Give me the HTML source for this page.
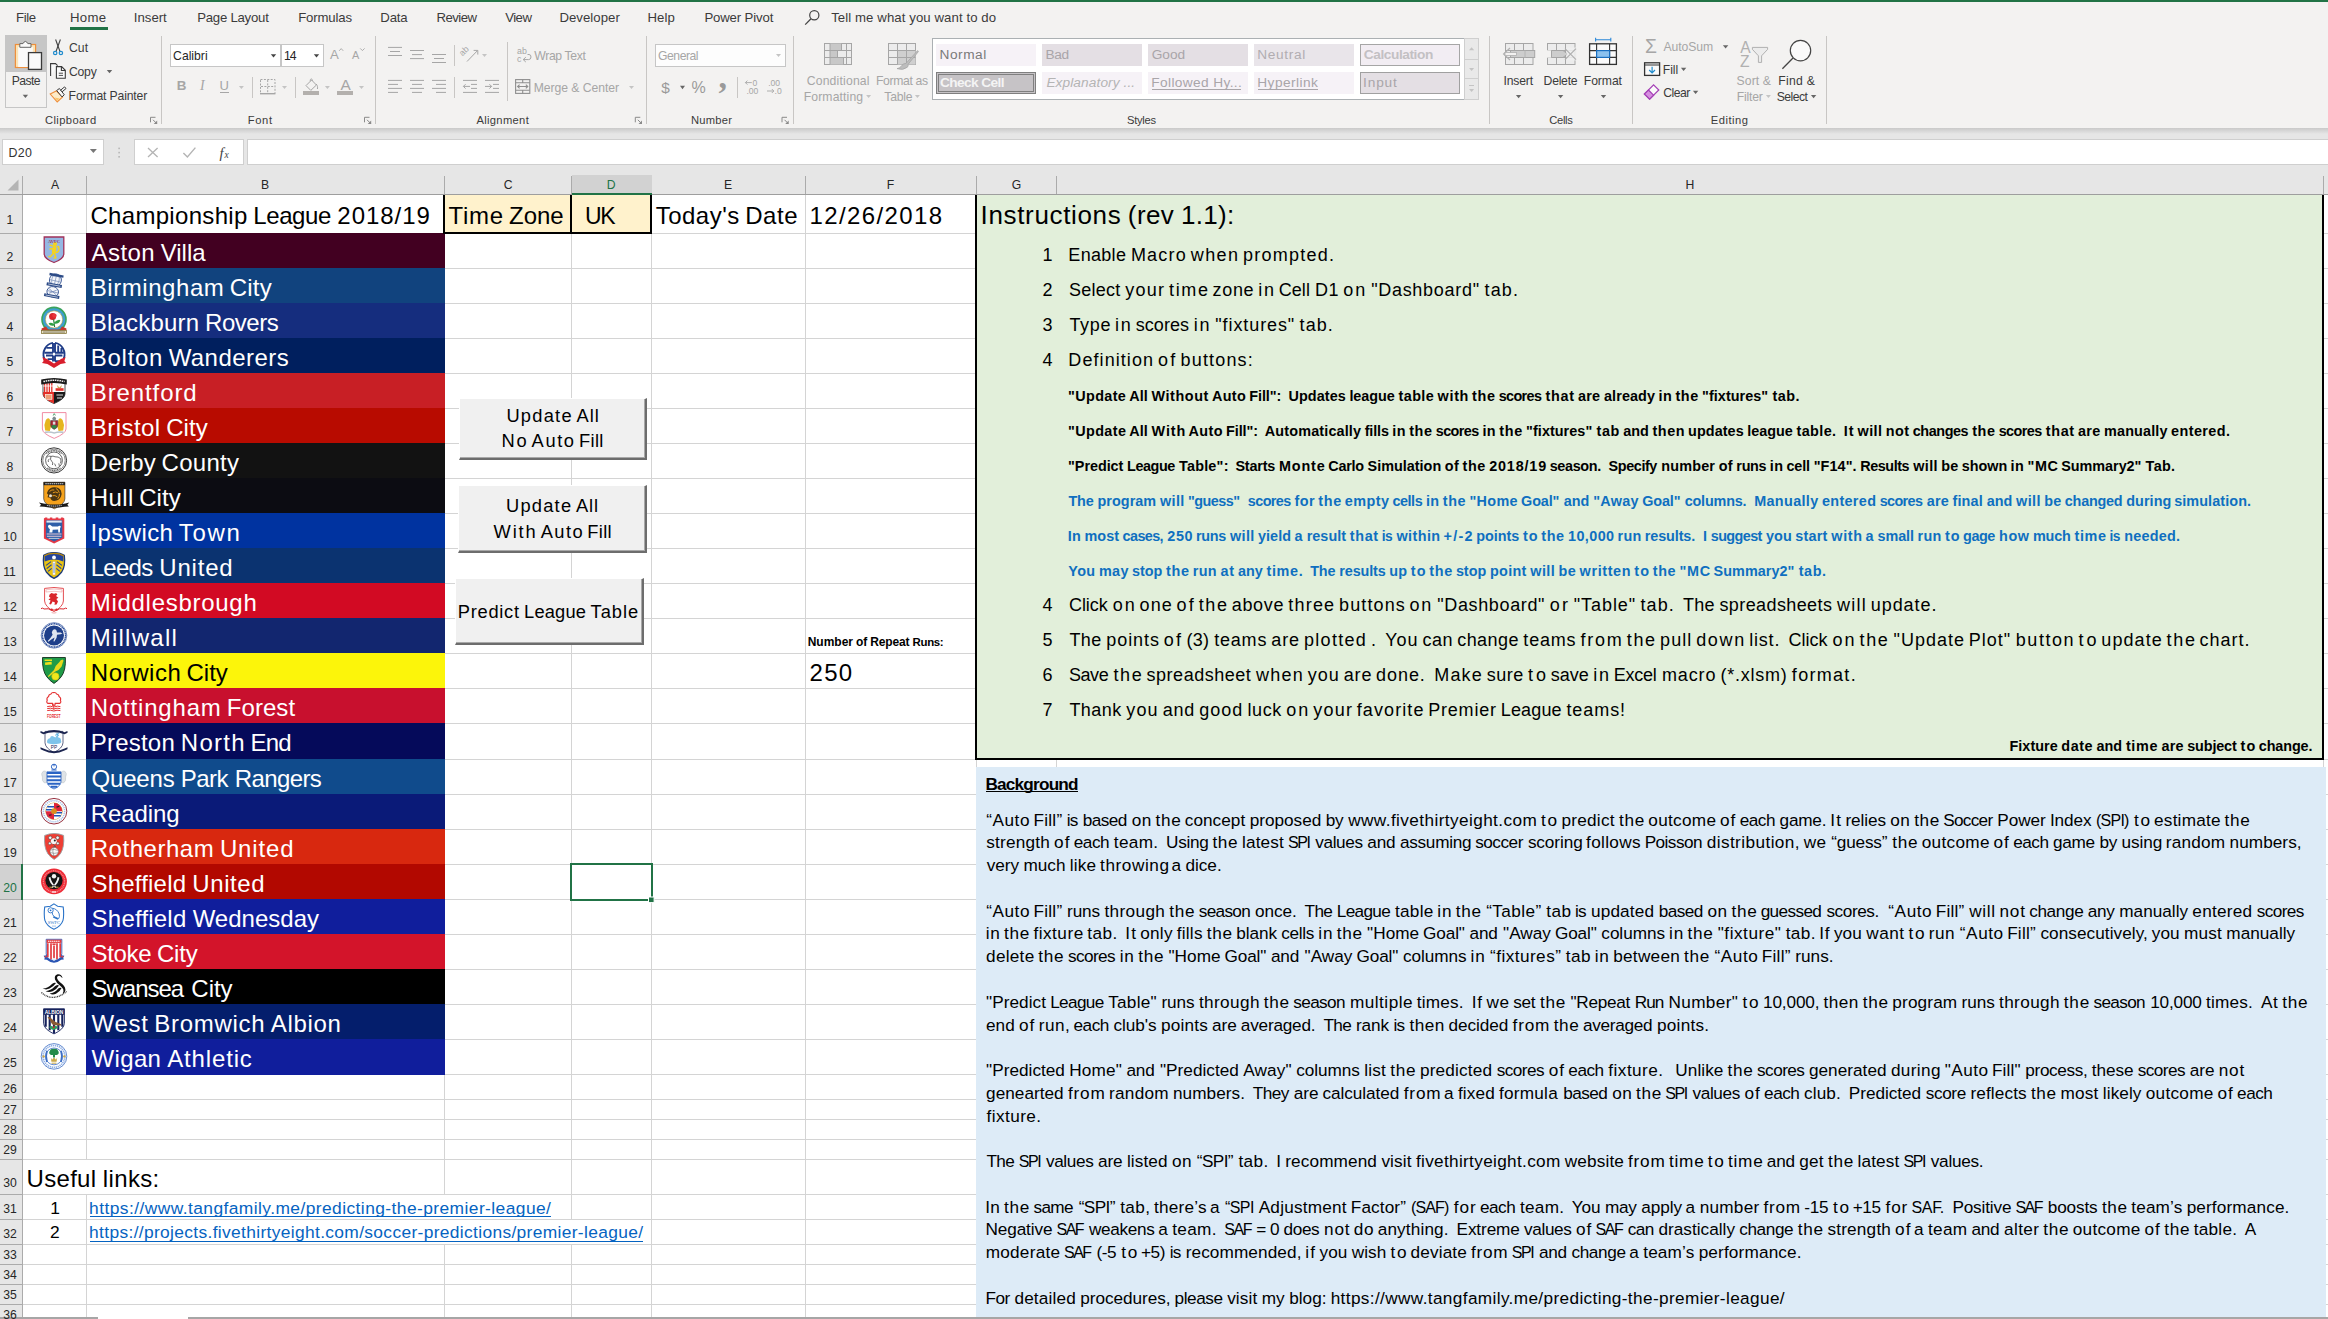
<!DOCTYPE html>
<html><head><meta charset="utf-8"><title>Dashboard</title><style>
html,body{margin:0;padding:0;}
body{width:2328px;height:1319px;overflow:hidden;background:#fff;position:relative;font-family:"Liberation Sans",sans-serif;}
#app{position:absolute;left:0;top:0;width:2328px;height:1319px;overflow:hidden;}
#app>div{position:absolute;box-sizing:border-box;}
svg.ov{position:absolute;left:0;top:0;}
svg.ov text{font-family:"Liberation Sans",sans-serif;white-space:pre;}
</style></head>
<body><div id="app">
<div style="left:0px;top:128px;width:2328px;height:67px;background:#e6e6e6;"></div>
<div style="left:0px;top:195px;width:22px;height:1124px;background:#e6e6e6;"></div>
<div style="left:86px;top:195px;width:1px;height:1124px;background:#d4d4d4;"></div>
<div style="left:444px;top:195px;width:1px;height:1124px;background:#d4d4d4;"></div>
<div style="left:571px;top:195px;width:1px;height:1124px;background:#d4d4d4;"></div>
<div style="left:651px;top:195px;width:1px;height:1124px;background:#d4d4d4;"></div>
<div style="left:805px;top:195px;width:1px;height:1124px;background:#d4d4d4;"></div>
<div style="left:86px;top:1160px;width:1px;height:34px;background:#fff;"></div>
<div style="left:444px;top:1195px;width:1px;height:49px;background:#fff;"></div>
<div style="left:571px;top:1220px;width:1px;height:24px;background:#fff;"></div>
<div style="left:22px;top:195px;width:1px;height:1124px;background:#ababab;"></div>
<div style="left:23px;top:233px;width:953px;height:1px;background:#d4d4d4;"></div>
<div style="left:2324px;top:233px;width:4px;height:1px;background:#d4d4d4;"></div>
<div style="left:0px;top:233px;width:22px;height:1px;background:#ababab;"></div>
<div style="left:23px;top:268px;width:953px;height:1px;background:#d4d4d4;"></div>
<div style="left:2324px;top:268px;width:4px;height:1px;background:#d4d4d4;"></div>
<div style="left:0px;top:268px;width:22px;height:1px;background:#ababab;"></div>
<div style="left:23px;top:303px;width:953px;height:1px;background:#d4d4d4;"></div>
<div style="left:2324px;top:303px;width:4px;height:1px;background:#d4d4d4;"></div>
<div style="left:0px;top:303px;width:22px;height:1px;background:#ababab;"></div>
<div style="left:23px;top:338px;width:953px;height:1px;background:#d4d4d4;"></div>
<div style="left:2324px;top:338px;width:4px;height:1px;background:#d4d4d4;"></div>
<div style="left:0px;top:338px;width:22px;height:1px;background:#ababab;"></div>
<div style="left:23px;top:373px;width:953px;height:1px;background:#d4d4d4;"></div>
<div style="left:2324px;top:373px;width:4px;height:1px;background:#d4d4d4;"></div>
<div style="left:0px;top:373px;width:22px;height:1px;background:#ababab;"></div>
<div style="left:23px;top:408px;width:953px;height:1px;background:#d4d4d4;"></div>
<div style="left:2324px;top:408px;width:4px;height:1px;background:#d4d4d4;"></div>
<div style="left:0px;top:408px;width:22px;height:1px;background:#ababab;"></div>
<div style="left:23px;top:443px;width:953px;height:1px;background:#d4d4d4;"></div>
<div style="left:2324px;top:443px;width:4px;height:1px;background:#d4d4d4;"></div>
<div style="left:0px;top:443px;width:22px;height:1px;background:#ababab;"></div>
<div style="left:23px;top:478px;width:953px;height:1px;background:#d4d4d4;"></div>
<div style="left:2324px;top:478px;width:4px;height:1px;background:#d4d4d4;"></div>
<div style="left:0px;top:478px;width:22px;height:1px;background:#ababab;"></div>
<div style="left:23px;top:513px;width:953px;height:1px;background:#d4d4d4;"></div>
<div style="left:2324px;top:513px;width:4px;height:1px;background:#d4d4d4;"></div>
<div style="left:0px;top:513px;width:22px;height:1px;background:#ababab;"></div>
<div style="left:23px;top:548px;width:953px;height:1px;background:#d4d4d4;"></div>
<div style="left:2324px;top:548px;width:4px;height:1px;background:#d4d4d4;"></div>
<div style="left:0px;top:548px;width:22px;height:1px;background:#ababab;"></div>
<div style="left:23px;top:583px;width:953px;height:1px;background:#d4d4d4;"></div>
<div style="left:2324px;top:583px;width:4px;height:1px;background:#d4d4d4;"></div>
<div style="left:0px;top:583px;width:22px;height:1px;background:#ababab;"></div>
<div style="left:23px;top:618px;width:953px;height:1px;background:#d4d4d4;"></div>
<div style="left:2324px;top:618px;width:4px;height:1px;background:#d4d4d4;"></div>
<div style="left:0px;top:618px;width:22px;height:1px;background:#ababab;"></div>
<div style="left:23px;top:653px;width:953px;height:1px;background:#d4d4d4;"></div>
<div style="left:2324px;top:653px;width:4px;height:1px;background:#d4d4d4;"></div>
<div style="left:0px;top:653px;width:22px;height:1px;background:#ababab;"></div>
<div style="left:23px;top:688px;width:953px;height:1px;background:#d4d4d4;"></div>
<div style="left:2324px;top:688px;width:4px;height:1px;background:#d4d4d4;"></div>
<div style="left:0px;top:688px;width:22px;height:1px;background:#ababab;"></div>
<div style="left:23px;top:723px;width:953px;height:1px;background:#d4d4d4;"></div>
<div style="left:2324px;top:723px;width:4px;height:1px;background:#d4d4d4;"></div>
<div style="left:0px;top:723px;width:22px;height:1px;background:#ababab;"></div>
<div style="left:23px;top:759px;width:953px;height:1px;background:#d4d4d4;"></div>
<div style="left:2324px;top:759px;width:4px;height:1px;background:#d4d4d4;"></div>
<div style="left:0px;top:759px;width:22px;height:1px;background:#ababab;"></div>
<div style="left:23px;top:794px;width:953px;height:1px;background:#d4d4d4;"></div>
<div style="left:2324px;top:794px;width:4px;height:1px;background:#d4d4d4;"></div>
<div style="left:0px;top:794px;width:22px;height:1px;background:#ababab;"></div>
<div style="left:23px;top:829px;width:953px;height:1px;background:#d4d4d4;"></div>
<div style="left:2324px;top:829px;width:4px;height:1px;background:#d4d4d4;"></div>
<div style="left:0px;top:829px;width:22px;height:1px;background:#ababab;"></div>
<div style="left:23px;top:864px;width:953px;height:1px;background:#d4d4d4;"></div>
<div style="left:2324px;top:864px;width:4px;height:1px;background:#d4d4d4;"></div>
<div style="left:0px;top:864px;width:22px;height:1px;background:#ababab;"></div>
<div style="left:23px;top:899px;width:953px;height:1px;background:#d4d4d4;"></div>
<div style="left:2324px;top:899px;width:4px;height:1px;background:#d4d4d4;"></div>
<div style="left:0px;top:899px;width:22px;height:1px;background:#ababab;"></div>
<div style="left:23px;top:934px;width:953px;height:1px;background:#d4d4d4;"></div>
<div style="left:2324px;top:934px;width:4px;height:1px;background:#d4d4d4;"></div>
<div style="left:0px;top:934px;width:22px;height:1px;background:#ababab;"></div>
<div style="left:23px;top:969px;width:953px;height:1px;background:#d4d4d4;"></div>
<div style="left:2324px;top:969px;width:4px;height:1px;background:#d4d4d4;"></div>
<div style="left:0px;top:969px;width:22px;height:1px;background:#ababab;"></div>
<div style="left:23px;top:1004px;width:953px;height:1px;background:#d4d4d4;"></div>
<div style="left:2324px;top:1004px;width:4px;height:1px;background:#d4d4d4;"></div>
<div style="left:0px;top:1004px;width:22px;height:1px;background:#ababab;"></div>
<div style="left:23px;top:1039px;width:953px;height:1px;background:#d4d4d4;"></div>
<div style="left:2324px;top:1039px;width:4px;height:1px;background:#d4d4d4;"></div>
<div style="left:0px;top:1039px;width:22px;height:1px;background:#ababab;"></div>
<div style="left:23px;top:1074px;width:953px;height:1px;background:#d4d4d4;"></div>
<div style="left:2324px;top:1074px;width:4px;height:1px;background:#d4d4d4;"></div>
<div style="left:0px;top:1074px;width:22px;height:1px;background:#ababab;"></div>
<div style="left:23px;top:1099px;width:953px;height:1px;background:#d4d4d4;"></div>
<div style="left:2324px;top:1099px;width:4px;height:1px;background:#d4d4d4;"></div>
<div style="left:0px;top:1099px;width:22px;height:1px;background:#ababab;"></div>
<div style="left:23px;top:1119px;width:953px;height:1px;background:#d4d4d4;"></div>
<div style="left:2324px;top:1119px;width:4px;height:1px;background:#d4d4d4;"></div>
<div style="left:0px;top:1119px;width:22px;height:1px;background:#ababab;"></div>
<div style="left:23px;top:1139px;width:953px;height:1px;background:#d4d4d4;"></div>
<div style="left:2324px;top:1139px;width:4px;height:1px;background:#d4d4d4;"></div>
<div style="left:0px;top:1139px;width:22px;height:1px;background:#ababab;"></div>
<div style="left:23px;top:1159px;width:953px;height:1px;background:#d4d4d4;"></div>
<div style="left:2324px;top:1159px;width:4px;height:1px;background:#d4d4d4;"></div>
<div style="left:0px;top:1159px;width:22px;height:1px;background:#ababab;"></div>
<div style="left:23px;top:1194px;width:953px;height:1px;background:#d4d4d4;"></div>
<div style="left:2324px;top:1194px;width:4px;height:1px;background:#d4d4d4;"></div>
<div style="left:0px;top:1194px;width:22px;height:1px;background:#ababab;"></div>
<div style="left:23px;top:1219px;width:953px;height:1px;background:#d4d4d4;"></div>
<div style="left:2324px;top:1219px;width:4px;height:1px;background:#d4d4d4;"></div>
<div style="left:0px;top:1219px;width:22px;height:1px;background:#ababab;"></div>
<div style="left:23px;top:1244px;width:953px;height:1px;background:#d4d4d4;"></div>
<div style="left:2324px;top:1244px;width:4px;height:1px;background:#d4d4d4;"></div>
<div style="left:0px;top:1244px;width:22px;height:1px;background:#ababab;"></div>
<div style="left:23px;top:1264px;width:953px;height:1px;background:#d4d4d4;"></div>
<div style="left:2324px;top:1264px;width:4px;height:1px;background:#d4d4d4;"></div>
<div style="left:0px;top:1264px;width:22px;height:1px;background:#ababab;"></div>
<div style="left:23px;top:1284px;width:953px;height:1px;background:#d4d4d4;"></div>
<div style="left:2324px;top:1284px;width:4px;height:1px;background:#d4d4d4;"></div>
<div style="left:0px;top:1284px;width:22px;height:1px;background:#ababab;"></div>
<div style="left:23px;top:1304px;width:953px;height:1px;background:#d4d4d4;"></div>
<div style="left:2324px;top:1304px;width:4px;height:1px;background:#d4d4d4;"></div>
<div style="left:0px;top:1304px;width:22px;height:1px;background:#ababab;"></div>
<div style="left:0px;top:194px;width:2328px;height:1px;background:#9e9e9e;"></div>
<div style="left:22px;top:176px;width:1px;height:18px;background:#ababab;"></div>
<div style="left:86px;top:176px;width:1px;height:18px;background:#ababab;"></div>
<div style="left:444px;top:176px;width:1px;height:18px;background:#ababab;"></div>
<div style="left:571px;top:176px;width:1px;height:18px;background:#ababab;"></div>
<div style="left:651px;top:176px;width:1px;height:18px;background:#ababab;"></div>
<div style="left:805px;top:176px;width:1px;height:18px;background:#ababab;"></div>
<div style="left:976px;top:176px;width:1px;height:18px;background:#ababab;"></div>
<div style="left:1056px;top:176px;width:1px;height:18px;background:#ababab;"></div>
<div style="left:2323px;top:176px;width:1px;height:18px;background:#ababab;"></div>
<div style="left:572px;top:175px;width:80px;height:18px;background:#d2d2d2;"></div>
<div style="left:572px;top:193px;width:80px;height:2px;background:#217346;"></div>
<div style="left:0px;top:865px;width:21px;height:34px;background:#d2d2d2;"></div>
<div style="left:21px;top:864px;width:2px;height:36px;background:#217346;"></div>
<div style="left:86px;top:233px;width:359px;height:36px;background:#420021;"></div>
<div style="left:86px;top:268px;width:359px;height:36px;background:#11437e;"></div>
<div style="left:86px;top:303px;width:359px;height:36px;background:#152d7e;"></div>
<div style="left:86px;top:338px;width:359px;height:36px;background:#001f5e;"></div>
<div style="left:86px;top:373px;width:359px;height:36px;background:#c81f25;"></div>
<div style="left:86px;top:408px;width:359px;height:36px;background:#b80b00;"></div>
<div style="left:86px;top:443px;width:359px;height:36px;background:#121212;"></div>
<div style="left:86px;top:478px;width:359px;height:36px;background:#0c0c12;"></div>
<div style="left:86px;top:513px;width:359px;height:36px;background:#0033a0;"></div>
<div style="left:86px;top:548px;width:359px;height:36px;background:#0b3370;"></div>
<div style="left:86px;top:583px;width:359px;height:36px;background:#d20a23;"></div>
<div style="left:86px;top:618px;width:359px;height:36px;background:#12266f;"></div>
<div style="left:86px;top:653px;width:359px;height:36px;background:#fcf50a;"></div>
<div style="left:86px;top:688px;width:359px;height:36px;background:#c8102e;"></div>
<div style="left:86px;top:723px;width:359px;height:37px;background:#050a5a;"></div>
<div style="left:86px;top:759px;width:359px;height:36px;background:#104b8c;"></div>
<div style="left:86px;top:794px;width:359px;height:36px;background:#0a1a78;"></div>
<div style="left:86px;top:829px;width:359px;height:36px;background:#d8280f;"></div>
<div style="left:86px;top:864px;width:359px;height:36px;background:#b20800;"></div>
<div style="left:86px;top:899px;width:359px;height:36px;background:#101e9c;"></div>
<div style="left:86px;top:934px;width:359px;height:36px;background:#d3142a;"></div>
<div style="left:86px;top:969px;width:359px;height:36px;background:#000000;"></div>
<div style="left:86px;top:1004px;width:359px;height:36px;background:#041e6c;"></div>
<div style="left:86px;top:1039px;width:359px;height:36px;background:#101e9c;"></div>
<div style="left:443px;top:195px;width:209px;height:39px;background:#000;"></div>
<div style="left:445px;top:195px;width:125px;height:37px;background:#fff2cc;"></div>
<div style="left:572px;top:195px;width:78px;height:37px;background:#fff2cc;"></div>
<div style="left:975px;top:195px;width:1349px;height:565px;background:#000;"></div>
<div style="left:977px;top:195px;width:1345px;height:563px;background:#e2efda;"></div>
<div style="left:976px;top:760px;width:1px;height:7px;background:#d4d4d4;"></div>
<div style="left:1056px;top:760px;width:1px;height:7px;background:#d4d4d4;"></div>
<div style="left:2323px;top:760px;width:1px;height:7px;background:#d4d4d4;"></div>
<div style="left:976px;top:767px;width:1350px;height:551px;background:#ddebf7;"></div>
<div style="left:0px;top:1317px;width:98px;height:2px;background:#a6a6a6;"></div>
<div style="left:188px;top:1317px;width:2140px;height:2px;background:#a6a6a6;"></div>
<div style="left:0px;top:0px;width:2328px;height:128px;background:#f3f2f1;"></div>
<div style="left:0px;top:0px;width:2328px;height:2px;background:#217346;"></div>
<div style="left:0px;top:128px;width:2328px;height:6px;background:linear-gradient(#c9c9c9,#e6e6e6);"></div>
<div style="left:70px;top:27px;width:38px;height:3px;background:#217346;"></div>
<div style="left:5px;top:35px;width:42px;height:73px;border:1px solid #c6c6c6;"></div>
<div style="left:5px;top:35px;width:42px;height:37px;background:#c6c6c6;"></div>
<div style="left:161px;top:36px;width:1px;height:88px;background:#c8c6c4;"></div>
<div style="left:170px;top:44px;width:111px;height:23px;background:#fff;border:1px solid #c6c6c6;"></div>
<div style="left:281px;top:44px;width:43px;height:23px;background:#fff;border:1px solid #c6c6c6;"></div>
<div style="left:220px;top:92px;width:9px;height:1px;background:#a6a6a6;"></div>
<div style="left:252px;top:77px;width:1px;height:21px;background:#c8c6c4;"></div>
<div style="left:295px;top:77px;width:1px;height:21px;background:#c8c6c4;"></div>
<div style="left:303px;top:91px;width:16px;height:4px;background:#b3b0ad;"></div>
<div style="left:337px;top:91px;width:16px;height:4px;background:#b3b0ad;"></div>
<div style="left:375px;top:36px;width:1px;height:88px;background:#c8c6c4;"></div>
<div style="left:454px;top:45px;width:1px;height:21px;background:#c8c6c4;"></div>
<div style="left:507px;top:42px;width:1px;height:59px;background:#c8c6c4;"></div>
<div style="left:454px;top:77px;width:1px;height:21px;background:#c8c6c4;"></div>
<div style="left:646px;top:36px;width:1px;height:88px;background:#c8c6c4;"></div>
<div style="left:655px;top:44px;width:131px;height:23px;background:#fdfdfd;border:1px solid #c6c6c6;"></div>
<div style="left:737px;top:77px;width:1px;height:21px;background:#c8c6c4;"></div>
<div style="left:793px;top:36px;width:1px;height:88px;background:#c8c6c4;"></div>
<div style="left:932px;top:38px;width:533px;height:62px;background:#fff;border:1px solid #abb0b3;"></div>
<div style="left:936px;top:44px;width:100px;height:22px;background:#f6f2f7;"></div>
<div style="left:1042px;top:44px;width:100px;height:22px;background:#e4dfe4;"></div>
<div style="left:1148px;top:44px;width:100px;height:22px;background:#e4dfe4;"></div>
<div style="left:1254px;top:44px;width:100px;height:22px;background:#e9e5ea;"></div>
<div style="left:1360px;top:44px;width:100px;height:22px;background:#f2edf3;border:1px solid #a6a6a6;"></div>
<div style="left:936px;top:72px;width:100px;height:22px;background:#c6c3c6;border:3px double #7f7f7f;"></div>
<div style="left:1042px;top:72px;width:100px;height:22px;background:#f6f2f7;"></div>
<div style="left:1148px;top:72px;width:100px;height:22px;background:#f6f2f7;"></div>
<div style="left:1254px;top:72px;width:100px;height:22px;background:#f6f2f7;"></div>
<div style="left:1360px;top:72px;width:100px;height:22px;background:#e4dfe4;border:1px solid #a0a0a0;"></div>
<div style="left:1152px;top:89px;width:89px;height:1px;background:#a9a5a9;"></div>
<div style="left:1258px;top:89px;width:60px;height:1px;background:#a9a5a9;"></div>
<div style="left:1464px;top:38px;width:15px;height:22px;background:#e9e9e9;border:1px solid #cfcfcf;"></div>
<div style="left:1464px;top:59px;width:15px;height:20px;background:#e9e9e9;border:1px solid #cfcfcf;"></div>
<div style="left:1464px;top:78px;width:15px;height:22px;background:#e9e9e9;border:1px solid #cfcfcf;"></div>
<div style="left:1469px;top:85px;width:5px;height:1px;background:#c4c4c4;"></div>
<div style="left:1489px;top:36px;width:1px;height:88px;background:#c8c6c4;"></div>
<div style="left:1632px;top:36px;width:1px;height:88px;background:#c8c6c4;"></div>
<div style="left:1826px;top:36px;width:1px;height:88px;background:#c8c6c4;"></div>
<div style="left:2px;top:139px;width:102px;height:26px;background:#fff;border:1px solid #cfcfcf;"></div>
<div style="left:134px;top:139px;width:110px;height:26px;background:#fff;border:1px solid #cfcfcf;"></div>
<div style="left:247px;top:139px;width:2090px;height:26px;background:#fff;border:1px solid #cfcfcf;"></div>
<div style="left:90px;top:1216px;width:461px;height:1px;background:#0563c1;"></div>
<div style="left:90px;top:1241px;width:553px;height:1px;background:#0563c1;"></div>
<div style="left:459px;top:398px;width:188px;height:62px;background:#f0f0f0;border-top:1px solid #fff;border-left:1px solid #fff;border-right:2px solid #6d6d6d;border-bottom:2px solid #6d6d6d;box-shadow:inset -1px -1px 0 #a8a8a8;"></div>
<div style="left:458px;top:485px;width:189px;height:68px;background:#f0f0f0;border-top:1px solid #fff;border-left:1px solid #fff;border-right:2px solid #6d6d6d;border-bottom:2px solid #6d6d6d;box-shadow:inset -1px -1px 0 #a8a8a8;"></div>
<div style="left:455px;top:578px;width:189px;height:67px;background:#f0f0f0;border-top:1px solid #fff;border-left:1px solid #fff;border-right:2px solid #6d6d6d;border-bottom:2px solid #6d6d6d;box-shadow:inset -1px -1px 0 #a8a8a8;"></div>
<div style="left:986px;top:791px;width:92px;height:1px;background:#000;"></div>
<svg class="ov" width="2328" height="1319" viewBox="0 0 2328 1319">
<path d="M7.5 190.5 L18.5 190.5 L18.5 179.5 Z" fill="#b4b4b4"/>
<rect x="571" y="864" width="81" height="36" fill="none" stroke="#217346" stroke-width="2"/>
<rect x="648.5" y="897" width="5.6" height="5.6" fill="#217346" stroke="#fff" stroke-width="1"/>
<circle cx="814.3" cy="15.3" r="4.6" fill="none" stroke="#444" stroke-width="1.2"/><path d="M811 18.8 L805.2 24.6" stroke="#444" stroke-width="1.3"/>
<g>
<rect x="15.4" y="44.5" width="20.2" height="23" fill="#fbe3b5" stroke="#ee8f3c" stroke-width="1.2"/>
<rect x="18.2" y="47" width="14.6" height="20" fill="#fafafa"/>
<path d="M19.8 47.3 V43.6 H23 Q25.4 39.2 27.8 43.6 H31 V47.3 Z" fill="#fafafa" stroke="#666" stroke-width="1"/>
<rect x="28.5" y="52.6" width="13" height="16.8" fill="#fafafa" stroke="#3a3a3a" stroke-width="1.3"/>
</g>
<path d="M22.70 94.80 h5.4 l-2.70 3.2 Z" fill="#666"/>
<g fill="none"><path d="M55.6 39.5 L60.2 52" stroke="#444" stroke-width="1.1"/><path d="M60.4 39.5 L55.8 52" stroke="#444" stroke-width="1.1"/>
<circle cx="55.2" cy="53" r="1.7" stroke="#1e8bcd" stroke-width="1.2"/><circle cx="60.9" cy="53" r="1.7" stroke="#1e8bcd" stroke-width="1.2"/></g>
<g fill="#fafafa" stroke="#3a3a3a" stroke-width="1.1"><path d="M50.6 76 V63.6 H55.5 L57.6 65.6"/><path d="M56.4 78.2 V66.6 H61.6 L65.3 70.3 V78.2 Z"/><path d="M61.4 66.8 V70.5 H65.2" fill="none"/><path d="M58.8 73.2 H63 M58.8 75.4 H63" stroke-width="0.9"/></g>
<path d="M106.80 70.10 h5.4 l-2.70 3.2 Z" fill="#666"/>
<g><path d="M50.2 94 L56.3 90.9 L62.6 97 L57.2 101.9 Z" fill="#fdebc8" stroke="#ee8f3c" stroke-width="1.1"/><path d="M54.6 97.6 L59.6 98.4 L57.2 100.8 Z" fill="#f9c46a"/>
<path d="M56.7 90.5 L59.4 88.5 L64.3 94.8 L62 96.9 Z" fill="#fafafa" stroke="#3a3a3a" stroke-width="1"/><path d="M60.7 90.1 L64.6 86.9 L66 88.5 L62.1 91.8 Z" fill="#fafafa" stroke="#3a3a3a" stroke-width="1"/></g>
<path d="M150.5 122.3 V117.3 H155.5" fill="none" stroke="#8a8a8a" stroke-width="1"/><path d="M153.0 119.8 L156.5 123.3" stroke="#8a8a8a" stroke-width="1"/><path d="M157.2 120.5 V124.0 H153.7 Z" fill="#8a8a8a"/>
<path d="M270.80 54.20 h5.4 l-2.70 3.2 Z" fill="#444"/>
<path d="M313.80 54.20 h5.4 l-2.70 3.2 Z" fill="#444"/>
<path d="M339.2 50.8 L341.2 48.6 L343.2 50.8" fill="none" stroke="#a6a6a6" stroke-width="0.9"/>
<path d="M360.2 48.4 L362.4 50.6 L364.6 48.4" fill="none" stroke="#a6a6a6" stroke-width="0.9"/>
<path d="M238.90 86.00 h5 l-2.50 3 Z" fill="#c4c4c4"/>
<g stroke="#a6a6a6" fill="none"><rect x="260.5" y="79.5" width="14.5" height="14" stroke-dasharray="2 1.4" stroke-width="1"/><path d="M267.7 80 V93 M261 86.5 H274.5" stroke-dasharray="2 1.4" stroke-width="1"/><path d="M260 93.7 H275.4" stroke-width="1.4"/></g>
<path d="M282.00 86.00 h5 l-2.50 3 Z" fill="#c4c4c4"/>
<g stroke="#a6a6a6" fill="none" stroke-width="1"><path d="M306 85.6 L311.6 80 L316.4 85 L310.8 90.4 Z"/><path d="M310.4 81.2 C309.6 78.4 312.6 78.2 312.4 80.8"/><path d="M316.2 84 C317.6 85.6 317.8 87.6 317.4 89"/></g>
<path d="M324.90 86.00 h5 l-2.50 3 Z" fill="#c4c4c4"/>
<path d="M359.00 86.00 h5 l-2.50 3 Z" fill="#c4c4c4"/>
<path d="M364.5 122.3 V117.3 H369.5" fill="none" stroke="#8a8a8a" stroke-width="1"/><path d="M367.0 119.8 L370.5 123.3" stroke="#8a8a8a" stroke-width="1"/><path d="M371.2 120.5 V124.0 H367.7 Z" fill="#8a8a8a"/>
<rect x="388.0" y="46.9" width="14" height="1" fill="#a6a6a6"/>
<rect x="390.0" y="51.0" width="10" height="1" fill="#a6a6a6"/>
<rect x="388.0" y="55.0" width="14" height="1" fill="#a6a6a6"/>
<rect x="410.0" y="50.0" width="14" height="1" fill="#a6a6a6"/>
<rect x="412.0" y="54.1" width="10" height="1" fill="#a6a6a6"/>
<rect x="410.0" y="58.1" width="14" height="1" fill="#a6a6a6"/>
<rect x="432.0" y="54.0" width="14" height="1" fill="#a6a6a6"/>
<rect x="434.0" y="58.0" width="10" height="1" fill="#a6a6a6"/>
<rect x="432.0" y="62.0" width="14" height="1" fill="#a6a6a6"/>
<g stroke="#a6a6a6" fill="none" stroke-width="1"><path d="M467 61.5 L477.6 50.5"/><path d="M473.6 50.4 H477.8 V54.6"/></g>
<text x="0" y="0" transform="translate(462.5,56.5) rotate(-45)" style="font-size:8.8px;fill:#a6a6a6">ab</text>
<path d="M482.00 53.90 h5 l-2.50 3 Z" fill="#c4c4c4"/>
<text x="517" y="53.5" style="font-size:8.8px;fill:#a6a6a6">ab</text><text x="517" y="61.8" style="font-size:8.8px;fill:#a6a6a6">c</text>
<g stroke="#a6a6a6" fill="none" stroke-width="1"><path d="M527.5 54.5 H529 Q531 54.5 531 57 Q531 59.6 528.6 59.6 H523.4"/><path d="M525.8 57.2 L523.2 59.6 L525.8 62"/></g>
<rect x="388.0" y="79.9" width="14" height="1" fill="#a6a6a6"/>
<rect x="388.0" y="83.9" width="10" height="1" fill="#a6a6a6"/>
<rect x="388.0" y="87.9" width="14" height="1" fill="#a6a6a6"/>
<rect x="388.0" y="91.9" width="10" height="1" fill="#a6a6a6"/>
<rect x="410.0" y="79.9" width="14" height="1" fill="#a6a6a6"/>
<rect x="412.0" y="83.9" width="10" height="1" fill="#a6a6a6"/>
<rect x="410.0" y="87.9" width="14" height="1" fill="#a6a6a6"/>
<rect x="412.0" y="91.9" width="10" height="1" fill="#a6a6a6"/>
<rect x="432.0" y="79.9" width="14" height="1" fill="#a6a6a6"/>
<rect x="436.0" y="83.9" width="10" height="1" fill="#a6a6a6"/>
<rect x="432.0" y="87.9" width="14" height="1" fill="#a6a6a6"/>
<rect x="436.0" y="91.9" width="10" height="1" fill="#a6a6a6"/>
<rect x="463.0" y="79.9" width="14" height="1" fill="#a6a6a6"/>
<rect x="463.0" y="91.9" width="14" height="1" fill="#a6a6a6"/>
<rect x="471.0" y="83.9" width="6" height="1" fill="#a6a6a6"/>
<rect x="471.0" y="87.9" width="6" height="1" fill="#a6a6a6"/>
<g stroke="#a6a6a6" fill="none" stroke-width="1"><path d="M463.4 86.4 H470"/><path d="M465.6 84.2 L463.4 86.4 L465.6 88.6"/></g>
<rect x="485.0" y="79.9" width="14" height="1" fill="#a6a6a6"/>
<rect x="485.0" y="91.9" width="14" height="1" fill="#a6a6a6"/>
<rect x="493.0" y="83.9" width="6" height="1" fill="#a6a6a6"/>
<rect x="493.0" y="87.9" width="6" height="1" fill="#a6a6a6"/>
<g stroke="#a6a6a6" fill="none" stroke-width="1"><path d="M485 86.4 H491.6"/><path d="M489.4 84.2 L491.6 86.4 L489.4 88.6"/></g>
<g stroke="#8f8f8f" fill="none" stroke-width="1.1"><rect x="515.6" y="79.6" width="14.2" height="13.8"/><path d="M515.6 82.8 H529.8 M515.6 90.2 H529.8 M522.7 79.6 V82.8 M522.7 90.2 V93.4"/><path d="M517.6 86.5 H527.8 M519.6 84.6 L517.6 86.5 L519.6 88.4 M525.8 84.6 L527.8 86.5 L525.8 88.4"/></g>
<path d="M629.00 86.00 h5 l-2.50 3 Z" fill="#c4c4c4"/>
<path d="M635.3 122.3 V117.3 H640.3" fill="none" stroke="#8a8a8a" stroke-width="1"/><path d="M637.8 119.8 L641.3 123.3" stroke="#8a8a8a" stroke-width="1"/><path d="M642.0 120.5 V124.0 H638.5 Z" fill="#8a8a8a"/>
<path d="M776.00 53.90 h5 l-2.50 3 Z" fill="#c4c4c4"/>
<path d="M680.00 85.80 h5 l-2.50 3.4 Z" fill="#666"/>
<g style="font-size:8.6px;fill:#a6a6a6"><text x="752.6" y="85.6">0</text><text x="746.4" y="94">.00</text><text x="768.2" y="85.6">.00</text><text x="774.6" y="94">.0</text></g>
<g stroke="#a6a6a6" fill="none" stroke-width="0.9"><path d="M745.4 82.6 H751.8 M747.4 80.6 L745.4 82.6 L747.4 84.6"/><path d="M767 91 H773.8 M771.8 89 L773.8 91 L771.8 93"/></g>
<path d="M782 122.3 V117.3 H787" fill="none" stroke="#8a8a8a" stroke-width="1"/><path d="M784.5 119.8 L788 123.3" stroke="#8a8a8a" stroke-width="1"/><path d="M788.7 120.5 V124.0 H785.2 Z" fill="#8a8a8a"/>
<g><rect x="824.5" y="43.5" width="27" height="21" fill="#ececec" stroke="#a6a6a6"/>
<rect x="830" y="43.5" width="11.5" height="7" fill="#c8c8c8"/><rect x="830" y="50.5" width="7.5" height="7" fill="#c8c8c8"/><rect x="830" y="57.5" width="13.5" height="7" fill="#c8c8c8"/>
<path d="M824.5 50.5 H851.5 M824.5 57.5 H851.5 M830 43.5 V64.5 M841.5 43.5 V50.5 M837.5 50.5 V57.5 M843.5 57.5 V64.5 M846.5 43.5 V64.5" stroke="#a6a6a6" fill="none"/></g>
<path d="M866.10 95.10 h5 l-2.50 3 Z" fill="#c4c4c4"/>
<g><rect x="888.5" y="43.5" width="27" height="21" fill="#ececec" stroke="#a6a6a6"/><rect x="897.5" y="50.5" width="18" height="14" fill="#cfcfcf"/>
<path d="M888.5 50.5 H915.5 M888.5 57.5 H915.5 M897.5 43.5 V64.5 M906.5 43.5 V64.5" stroke="#a6a6a6" fill="none"/>
<path d="M917.6 50.6 L906 63.4 Q903 63 901 66.6 Q899.4 68.4 897 68.6 Q903 70.8 907.4 67.2 Q908.6 65.6 908 64.4 L918.4 51.6 Z" fill="#bdbdbd" stroke="#a6a6a6" stroke-width="0.8"/></g>
<path d="M914.90 95.10 h5 l-2.50 3 Z" fill="#c4c4c4"/>
<path d="M1469 50.2 h5.2 l-2.6 -3 Z" fill="#c4c4c4"/>
<path d="M1469.10 68.10 h5 l-2.50 3 Z" fill="#c4c4c4"/>
<path d="M1469.10 88.90 h5 l-2.50 3 Z" fill="#c4c4c4"/>
<g><rect x="1505.5" y="43.5" width="27.5" height="21" fill="#ececec" stroke="#a6a6a6"/>
<path d="M1505.5 50.5 H1533 M1505.5 57.5 H1533 M1514.5 43.5 V64.5 M1523.5 43.5 V64.5" stroke="#a6a6a6" fill="none"/>
<rect x="1510.5" y="50.5" width="24.2" height="7" fill="#cdcdcd" stroke="#a6a6a6"/><path d="M1525 50.5 V57.5" stroke="#b4b4b4"/>
<path d="M1510 48 L1503.6 54 L1510 60" fill="none" stroke="#b0b0b0" stroke-width="1.2"/><rect x="1505" y="52.5" width="11.5" height="3" fill="#f3f2f1" stroke="#b0b0b0" stroke-width="0.8"/></g>
<path d="M1515.90 95.00 h5.4 l-2.70 3.2 Z" fill="#666"/>
<g><rect x="1547.5" y="43.5" width="27.5" height="21" fill="#ececec" stroke="#a6a6a6"/>
<path d="M1547.5 50.5 H1575 M1547.5 57.5 H1575 M1556.5 43.5 V64.5 M1565.5 43.5 V64.5" stroke="#a6a6a6" fill="none"/>
<rect x="1546.5" y="50.3" width="5" height="7.4" fill="#f3f2f1"/>
<path d="M1551.5 50.5 H1563 L1567.5 54 L1563 57.5 H1551.5 Z" fill="#cdcdcd" stroke="#a6a6a6"/>
<rect x="1566.5" y="47.5" width="10" height="13" fill="#f0f0f0" opacity="0.85"/>
<path d="M1565 48.6 L1576 59.6 M1576 48.6 L1565 59.6" stroke="#b0b0b0" stroke-width="1.2"/></g>
<path d="M1557.90 95.00 h5.4 l-2.70 3.2 Z" fill="#666"/>
<g><rect x="1589.6" y="43.8" width="26.8" height="20.6" fill="#fafafa" stroke="#333" stroke-width="1.3"/>
<path d="M1589.6 50.6 H1616.4 M1589.6 57.4 H1616.4 M1596.6 43.8 V64.4 M1609.6 43.8 V64.4" stroke="#333" stroke-width="1.1" fill="none"/>
<rect x="1596.6" y="50.6" width="13" height="6.8" fill="#8bc1ee" stroke="#1a6fc0" stroke-width="1.2"/>
<path d="M1595.6 39.7 H1610.8 M1595.6 37.8 V41.4 M1610.8 37.8 V41.4" stroke="#2b88d8" stroke-width="1.1" fill="none"/></g>
<path d="M1600.80 95.00 h5.4 l-2.70 3.2 Z" fill="#666"/>
<path d="M1722.90 45.20 h5.4 l-2.70 3.2 Z" fill="#666"/>
<g><rect x="1644.6" y="62.8" width="15" height="12.6" fill="#fafafa" stroke="#333" stroke-width="1.3"/><path d="M1644.6 65 H1659.6" stroke="#333" stroke-width="1"/>
<path d="M1652.1 66.8 V72.6 M1649.2 70 L1652.1 72.9 L1655 70" fill="none" stroke="#1e8bcd" stroke-width="1.2"/></g>
<path d="M1680.90 67.80 h5.4 l-2.70 3.2 Z" fill="#666"/>
<g><path d="M1653.6 84.8 L1658.8 90 L1649.6 99.2 L1644.4 94 Z" fill="#fafafa" stroke="#a33fb5" stroke-width="1.2"/><path d="M1648.4 90 L1653.6 95.2 L1649.6 99.2 L1644.4 94 Z" fill="#d68fe0" stroke="#a33fb5" stroke-width="1.2"/></g>
<path d="M1692.90 90.80 h5.4 l-2.70 3.2 Z" fill="#666"/>
<path d="M1752.4 47.4 H1767.6 V49.4 L1761.6 55.8 V62.4 H1758.4 V55.8 L1752.4 49.4 Z" fill="#ececec" stroke="#b0b0b0" stroke-width="1"/>
<path d="M1765.90 95.10 h5 l-2.50 3 Z" fill="#c4c4c4"/>
<circle cx="1800.5" cy="50.6" r="10.2" fill="#fafafa" stroke="#444" stroke-width="1.2"/><path d="M1793 58 L1782.4 68.8" stroke="#444" stroke-width="1.3"/>
<path d="M1810.90 95.00 h5.4 l-2.70 3.2 Z" fill="#666"/>
<path d="M89.90 149.10 h7 l-3.50 3.8 Z" fill="#777"/>
<rect x="118.4" y="147.6" width="1.4" height="1.6" fill="#b0b0b0"/>
<rect x="118.4" y="151.8" width="1.4" height="1.6" fill="#b0b0b0"/>
<rect x="118.4" y="156" width="1.4" height="1.6" fill="#b0b0b0"/>
<path d="M148 148 L157.6 157 M157.6 148 L148 157" stroke="#b4b4b4" stroke-width="1.3" fill="none"/><path d="M183.4 153 L187.4 157 L195.4 147.6" stroke="#b4b4b4" stroke-width="1.4" fill="none"/>
<g transform="translate(44.2,237)"><path d="M0 0 H19.6 V16.83 Q19.6 21.93 9.80 25.5 Q0 21.93 0 16.83 Z" fill="#95b8e3" stroke="#a0315a" stroke-width="1.3"/>
<g stroke="#f4d321" stroke-width="1.5" stroke-linecap="round" fill="none"><path d="M10 9.4 L6 8.2 M9.6 11.6 L5.8 12 M9 16.4 L6.2 19.8 L4.8 19.6 M10.4 16.6 L11.6 20.6 L10 21 M11.2 15.6 Q15.4 15.4 14.6 10.6 Q14.4 9 13.4 9.6"/></g><ellipse cx="10" cy="12.8" rx="2.1" ry="4.4" fill="#f4d321" transform="rotate(12 10 12.8)"/><circle cx="10.8" cy="7" r="2.1" fill="#f4d321"/>
<text x="9.8" y="5.6" text-anchor="middle" style="font-size:4.6px;font-weight:700;fill:#a0315a;font-family:'Liberation Serif',serif">AVFC</text></g>
<g transform="translate(46,272.3)"><g transform="rotate(13 8 13)"><ellipse cx="8.2" cy="7.6" rx="6" ry="6.2" fill="#f4f6fa" stroke="#3a5794" stroke-width="0.9"/>
<path d="M3.2 4.4 Q8 2.6 13.2 4.2 M2.4 8.4 H14 M8.2 1.6 V13.6 M5 3 Q3.8 7.6 5.4 12.4 M11.4 3 Q12.6 7.6 11 12.4" stroke="#6f86b5" stroke-width="0.6" fill="none"/>
<path d="M1 1.8 L15.2 1.2 L15.4 3.6 L1.2 4.2 Z" fill="#2b4a86"/>
<path d="M0.4 11.6 L15.8 11 L16 14 L0.6 14.6 Z" fill="#2b4a86"/><path d="M2 13 L14.4 12.5" stroke="#dfe5f0" stroke-width="0.7"/>
<ellipse cx="8.2" cy="19.6" rx="5.8" ry="5.2" fill="#f4f6fa" stroke="#3a5794" stroke-width="0.9"/>
<path d="M4 17.4 L12.4 21.8 M4.8 22 L11.8 17 M2.8 19.6 H13.6" stroke="#6f86b5" stroke-width="0.7"/>
<path d="M0.4 22.8 L15.8 22.2 L16 25.2 L0.6 25.8 Z" fill="#2b4a86"/><path d="M2 24.3 L14.4 23.8" stroke="#dfe5f0" stroke-width="0.7"/></g></g>
<g transform="translate(41,307)"><circle cx="13" cy="12.4" r="12" fill="#3f9fd0"/><circle cx="13" cy="12.4" r="12" fill="none" stroke="#3aa35c" stroke-width="1.6"/>
<circle cx="13" cy="12.4" r="8.6" fill="#fff" stroke="#b99a3a" stroke-width="0.6"/>
<circle cx="11.6" cy="9.4" r="3.5" fill="#d8232a"/><circle cx="13.4" cy="8.6" r="2.2" fill="#e8343a"/>
<path d="M12.6 12.4 L13.6 20" stroke="#1f7a34" stroke-width="1.1"/><path d="M13 15.6 Q17.6 11.6 19.4 13.4 Q17.6 17.4 13.2 16.6 Z" fill="#2fa044"/><path d="M13 17 Q9 14.6 7.6 16.8 Q9.6 19.8 13.2 18.4 Z" fill="#2fa044"/>
<path d="M0.6 21.6 L5 19.4 L7 22.6 H19 L21 19.4 L25.4 21.6 V23.6 H0.6 Z" fill="#c8372d"/>
<rect x="0.4" y="23.4" width="25.2" height="3.2" fill="#e9e2c4" stroke="#7b6a2c" stroke-width="0.7"/><rect x="2" y="24.5" width="22" height="1.1" fill="#8c8468"/></g>
<g transform="translate(42,341.5)"><g fill="none" stroke="#1f3c88" stroke-width="1.9"><path d="M11 1.4 A11 11.6 0 0 0 2.2 17"/><path d="M13 1.4 A11 11.6 0 0 1 21.8 17"/>
<path d="M11 1.6 V11.2 M4.4 6.4 H11 M2.4 11.2 H11 M13 1.6 V11.2 M13 11.2 H21.8 M16.2 4 V11 M19.4 6.6 V11"/>
<path d="M11 14 V20 M4 14 H11 M5.6 17.6 H11 M13 14 V20 M13 14 H20.4 M13 19.8 H18.6"/></g>
<path d="M0.4 15.4 L5 17.6 L12 22 L19 17.6 L23.6 15.4 L22.4 19.4 L24 21.4 L18.6 22.4 L12 26.4 L5.4 22.4 L0 21.4 L1.6 19.4 Z" fill="#d81e2c"/></g>
<g transform="translate(41,377)"><path d="M2 3 H24 V17 Q24 22 13 26.6 Q2 22 2 17 Z" fill="#fff" stroke="#222" stroke-width="0.8"/>
<path d="M2 15 H13 V26.4 Q2 22 2 17 Z" fill="#e23028"/><path d="M13 15 H24 V17 Q24 22 13 26.4 Z" fill="#1a1a1a"/>
<path d="M3.6 3 V15 M6 3 V15 M8.4 3 V15 M10.8 3 V15" stroke="#e23028" stroke-width="1.3"/><path d="M2 9 H13" stroke="#fff" stroke-width="0.8"/>
<rect x="14.6" y="11.2" width="8" height="2.6" fill="#e23028"/><path d="M16 8 L18.4 10.4 L21 8 L20 11 H16.8 Z" fill="#caa64a"/>
<rect x="4.4" y="17.4" width="6.6" height="5" fill="#f4d6a0" stroke="#fff" stroke-width="0.5"/><path d="M5 19 H10.4 M5 21 H10.4" stroke="#e23028" stroke-width="0.7"/>
<path d="M15.4 18 H22 M16 21 H21" stroke="#ddd" stroke-width="1"/>
<path d="M0.2 2.6 Q13 -0.6 25.8 2.6 V7.6 Q13 4.6 0.2 7.6 Z" fill="#1a1a1a"/><path d="M2.4 4.6 Q13 2 23.6 4.6" stroke="#eee" stroke-width="1.5" fill="none" stroke-dasharray="1.6 0.7"/></g>
<g transform="translate(41.8,412)"><path d="M0.6 0.6 H24.2 V17 Q24 21.6 12.4 26.4 Q0.6 21.6 0.6 17 Z" fill="#fff" stroke="#ef7f9a" stroke-width="0.9"/>
<path d="M4 8 Q6.4 4.6 8 7.6 L9.4 14 L8 19 L3.4 18.6 L2.6 13 Z" fill="#e6b51f"/><path d="M20.8 8 Q18.4 4.6 16.8 7.6 L15.4 14 L16.8 19 L21.4 18.6 L22.2 13 Z" fill="#e6b51f"/>
<path d="M8.8 8.6 H16 V13 Q16 16 12.4 17.4 Q8.8 16 8.8 13 Z" fill="#a3202f" stroke="#444" stroke-width="0.5"/><path d="M9.4 13.4 Q12.4 12.6 15.4 13.4 Q14.8 16 12.4 17 Q10 16 9.4 13.4Z" fill="#2c8a4a"/><rect x="11" y="9.6" width="2.6" height="3" fill="#ddd"/>
<path d="M10.4 6.4 Q12.4 2.6 14.4 6.4 L13.6 8.4 H11.2 Z" fill="#7d8a8c"/><path d="M11.4 3.6 L12.4 1.6 L13.6 3.4" stroke="#2c8a4a" stroke-width="0.8" fill="none"/>
<path d="M3 19.6 Q7.6 18.6 12.4 20.2 Q17 18.6 21.8 19.6 L21.4 21.2 Q17 20.2 12.4 21.8 Q7.6 20.2 3.4 21.2 Z" fill="#b9c4cc"/></g>
<g transform="translate(41,447)"><circle cx="13" cy="13.4" r="12.6" fill="#fff" stroke="#222" stroke-width="0.9"/><circle cx="13" cy="13.4" r="11.2" fill="none" stroke="#222" stroke-width="0.5"/><circle cx="13" cy="13.4" r="8.4" fill="none" stroke="#222" stroke-width="0.7"/>
<path d="M5.8 10.4 Q7.6 8.2 10 9.4 Q12 8.6 14 9.8 Q17.4 9.4 19.6 11.6 Q20.6 14 19.4 16.4 M10 9.4 Q8.6 12.6 10.8 14.4 Q12.6 15.6 11.4 18 M8.4 11.8 Q6.6 13 7.4 15 M13.6 16.6 L14.8 19.4 M17.8 16.4 L18.4 19" stroke="#333" stroke-width="0.7" fill="none"/>
<path d="M5.4 6.4 Q13 0.8 20.6 6.4" stroke="#555" stroke-width="1.3" fill="none" stroke-dasharray="1.1 0.6"/><path d="M6.4 21 Q13 25.6 19.6 21" stroke="#555" stroke-width="1.3" fill="none" stroke-dasharray="1.1 0.6"/></g>
<g transform="translate(38.9,481.8)"><path d="M4.8 0.4 H26 V17 Q25.6 22.6 15.4 27 Q5.2 22.6 4.8 17 Z" fill="#f5a21c" stroke="#222" stroke-width="0.6"/>
<rect x="4.8" y="0.4" width="21.2" height="3" fill="#1a1a1a"/><path d="M6.4 1.9 H24.4" stroke="#ddd" stroke-width="1.1" stroke-dasharray="1.5 0.6"/>
<path d="M9 9 Q11 5.6 15 5.4 Q19.6 5 22 8.6 Q23.4 11.6 22 15 Q20.4 18.6 16.6 19 Q12 19.6 11.4 16 L8.6 15.4 L9.4 13 L8 11.4 Z" fill="#4a3512"/>
<path d="M10.6 9.6 Q13 7.4 15.4 8.2 M14 11 Q16.6 9.4 19 11 M13.4 14 Q16 13 18.4 15 M17 6.6 Q19.6 8 20.4 11 M20.6 12 Q20.6 15 18.8 17" stroke="#f5a21c" stroke-width="0.9" fill="none"/><circle cx="11.6" cy="14" r="1.5" fill="#e8e2d4"/>
<path d="M0 20.6 L4.6 21.6 Q15.4 24 26.4 21.6 L30.4 20.6 L28.4 23 L30 24.8 L25.6 25 Q15.4 27 5.2 25 L0.6 24.8 L2.2 23 Z" fill="#1a1a1a"/><path d="M8 23.6 Q15.4 25 22.8 23.6" stroke="#ddd" stroke-width="1" fill="none" stroke-dasharray="1.4 0.6"/></g>
<g transform="translate(43.3,517)"><path d="M0.6 1.6 L2 0.4 H4 V1.6 H6.6 V0.4 H9 V1.6 H12.4 V0.4 H15 V1.6 H17.6 V0.4 H19.6 L21 1.6 V21.6 L10.8 26.6 L0.6 21.6 Z" fill="#e63946"/>
<path d="M2.6 3.2 H19 V20.6 L10.8 24.4 L2.6 20.6 Z" fill="#2f5fa8"/>
<rect x="3.2" y="3.6" width="15.2" height="2" fill="#fff" opacity="0.85"/>
<path d="M4.6 9.6 Q5 7.4 7 8 L9 9.4 H14.6 Q16.6 8 17.6 9.8 L16.8 11 L16.6 15.6 L15 15.6 L14.8 12.6 L9.4 12.8 L9 15.6 L6 15.6 L6.6 12 L5.6 11.4 Z" fill="#fff"/>
<path d="M3.4 17 H18.2 M3.6 19.2 H18" stroke="#e8c8d4" stroke-width="1.1"/><path d="M5.4 21.4 H16.2" stroke="#bcd" stroke-width="1"/></g>
<g transform="translate(43.1,552)"><path d="M10.9 0.6 Q17 0.4 21.2 3.4 Q22.6 14 18.6 20 Q15 24.6 10.9 26.4 Q6.8 24.6 3.2 20 Q-0.8 14 0.6 3.4 Q4.8 0.4 10.9 0.6 Z" fill="#e9c413" stroke="#1d3a7a" stroke-width="1.3"/>
<path d="M10.9 1.6 Q16.4 1.6 20.2 4 Q20.6 7.4 20.2 9.6 Q15.6 7.6 10.9 7.6 Q6.2 7.6 1.6 9.6 Q1.2 7.4 1.6 4 Q5.4 1.6 10.9 1.6Z" fill="#24439a"/>
<path d="M1.2 3.8 Q5.2 1.4 10.9 1.4 Q16.6 1.4 20.6 3.8" stroke="#b8860b" stroke-width="1.1" fill="none"/>
<circle cx="10.9" cy="5.4" r="1.9" fill="#fff"/>
<rect x="9.4" y="9.4" width="3" height="13.6" fill="#f4f4f4" stroke="#c9a227" stroke-width="0.4"/><path d="M10.9 11 V21" stroke="#5b7fd0" stroke-width="0.9"/>
<path d="M3 13.4 L8 9.6 M3.6 16.6 L8.4 12.8 M5 19.4 L8.6 16.4 M18.8 13.4 L13.8 9.6 M18.2 16.6 L13.4 12.8 M16.8 19.4 L13.2 16.4" stroke="#24439a" stroke-width="1.1"/></g>
<g transform="translate(41,587)"><path d="M3.6 1.4 Q13 -0.4 22.4 1.4 V14 Q22 19.6 13 24.6 Q4 19.6 3.6 14 Z" fill="#fff" stroke="#e03a3e" stroke-width="0.9"/>
<path d="M5 2.8 Q13 1.2 21 2.8 V5 Q13 3.6 5 5 Z" fill="none" stroke="#e8888a" stroke-width="0.5"/>
<path d="M8.6 7.4 L10.4 6 L13 6.8 Q15.4 5.4 16.4 7.6 L15 9 L17.4 10.8 L15.4 12 L17 14.6 L15.6 17.4 L13.4 17.8 L14 15.4 L11.6 14.6 L10 17.6 L8.2 17 L9.6 13.4 L7.4 12.6 L9.6 11 L8 9.6 Z" fill="#d9262c"/>
<path d="M0 21.6 Q2 20.4 3 22 Q8 21 10 23 H16 Q18 21 23 22 Q24 20.4 26 21.6" stroke="#d9262c" stroke-width="1" fill="none"/><circle cx="10.6" cy="22.6" r="1.2" fill="#d9262c"/><circle cx="15.6" cy="22.6" r="1.2" fill="#d9262c"/><path d="M10.6 25.6 Q13 26.6 15.4 25.6" stroke="#e8888a" stroke-width="0.7" fill="none"/></g>
<g transform="translate(41,621.8)"><circle cx="13" cy="13.6" r="12.8" fill="#fff" stroke="#2a4d9a" stroke-width="0.6"/><circle cx="13" cy="13.6" r="11.6" fill="none" stroke="#2a4d9a" stroke-width="1.5" stroke-dasharray="1.2 0.5"/><circle cx="13" cy="13.6" r="10" fill="#1e3f8a"/>
<path d="M11.6 8.6 Q13.6 6.6 15.4 8.4 L16 10.6 L19.6 10.8 L21.4 11.6 L19.6 12.4 L16 13 L15.6 16 L13.4 19.6 L12.4 19.4 L13.6 15.6 L10.6 17.4 L7.4 20 L6.8 19.2 L9.6 16 L11.6 13 L10.8 10.6 Z" fill="#dfe6f0"/></g>
<g transform="translate(42,657)"><path d="M0.5 0.5 H23.4 Q24 14 19 20 Q16 24 12 26.4 Q8 24 5 20 Q0 14 0.5 0.5 Z" fill="#1f9b48" stroke="#14301c" stroke-width="0.9"/>
<path d="M2.6 2.6 H10 V4 H2.6 Z M3 5.6 L9.6 4.8 L9.8 7.4 L3.2 8 Z" fill="#f0e01c"/>
<path d="M20.6 2.4 Q22.4 3.6 21 5 L19.6 9.4 Q17 13.4 13.4 14.4 L6.6 20 L5.8 19.2 L12 13 Q13.6 8 17.4 5 Q18.4 2.4 20.6 2.4 Z" fill="#e8d91c"/>
<circle cx="13.4" cy="19.4" r="3.7" fill="#f0e81c" stroke="#b8ac14" stroke-width="0.5"/></g>
<g transform="translate(46,692)"><path d="M7.8 0.6 Q9.8 0.2 10.6 2 Q13 2.4 13 4.6 Q15.4 6 14.4 8.4 Q15.6 10.4 13.6 11.4 H9.2 L8.8 14 H6.8 L6.4 11.4 H2 Q0 10.4 1.2 8.4 Q0.2 6 2.6 4.6 Q2.6 2.4 5 2 Q5.8 0.2 7.8 0.6 Z" fill="#fff" stroke="#e53233" stroke-width="1.1"/>
<path d="M7.8 11.6 V17.6 M1.2 14.6 Q4.6 13.6 6.6 14.8 M14.4 14.6 Q11 13.6 9 14.8 M1.2 16.6 Q4.6 15.6 7.8 17 Q11 15.6 14.4 16.6 M1.2 18.6 Q4.6 17.6 7.8 19 Q11 17.6 14.4 18.6" stroke="#e53233" stroke-width="1" fill="none"/>
<text x="7.8" y="25.6" text-anchor="middle" textLength="13.6" lengthAdjust="spacingAndGlyphs" style="font-size:5.6px;font-weight:700;fill:#e53233">FOREST</text></g>
<g transform="translate(40,727.8)"><path d="M5 3.6 H23 V15 Q22.6 20.6 14 24.6 Q5.4 20.6 5 15 Z" fill="#fff" stroke="#1c2550" stroke-width="0.7"/>
<path d="M0.6 3.2 L3.6 4.4 Q14 0.2 24.4 4.4 L27.4 3.2 L27.6 5 L24.6 6.4 Q14 2.4 3.4 6.4 L0.4 5 Z" fill="#1c2550"/>
<path d="M0.4 19.4 L3.4 20.8 Q14 26 24.6 20.8 L27.6 19.4 L27.4 21.4 L24.6 22.8 Q14 28 3.4 22.8 L0.6 21.4 Z" fill="#1c2550"/>
<path d="M7 13.6 Q7.4 10.6 10 10.4 Q10.6 7.6 13 8.4 L15.4 9.6 L17.4 6.4 L18.6 6.6 L18 9.4 Q21 10 21 12.6 Q22 15 19.6 15.6 Q14 17 8.6 15.8 Q6.8 15.4 7 13.6 Z" fill="#7ec4ea"/><path d="M15 7.6 L19.6 5 M16.4 5 L18.6 8" stroke="#3b9fd8" stroke-width="0.7"/>
<text x="14" y="21" text-anchor="middle" style="font-size:4.8px;fill:#1c2550">PP</text></g>
<g transform="translate(41,763.4)"><path d="M2 8 Q-0.4 10 1.4 13.6 Q0.4 17.6 3.6 19.6 L6 19 V9 Q4 6.6 2 8 Z M24 8 Q26.4 10 24.6 13.6 Q25.6 17.6 22.4 19.6 L20 19 V9 Q22 6.6 24 8 Z" fill="#dfe3e6" stroke="#b8c0c6" stroke-width="0.5"/>
<circle cx="13" cy="3.4" r="2.6" fill="#fff" stroke="#2a63c4" stroke-width="1"/><path d="M10.4 6.6 H15.6 M13 0.6 V3" stroke="#2a63c4" stroke-width="1"/>
<path d="M6 8.4 H20 V18 Q20 22.6 13 25.6 Q6 22.6 6 18 Z" fill="#fff" stroke="#2a63c4" stroke-width="0.8"/>
<path d="M6 9.6 H20 M6 13.2 H20 M6 16.8 H20 M6.8 20.4 H19.2 M9.6 23.4 H16.4" stroke="#2a63c4" stroke-width="2"/></g>
<g transform="translate(41,797.7)"><circle cx="13" cy="13.5" r="12.8" fill="#fff" stroke="#8c1d2c" stroke-width="0.9"/><circle cx="13" cy="13.5" r="10.6" fill="none" stroke="#a9c2e8" stroke-width="1.6" stroke-dasharray="1.2 0.8"/>
<circle cx="13" cy="13.5" r="8.2" fill="#e0243c" stroke="#c9a227" stroke-width="0.8"/>
<path d="M13 5.3 A8.2 8.2 0 0 0 13 21.7 Z" fill="#fff"/><path d="M6.2 9 H13 M5 12 H13 M5 15 H13 M6.2 18 H13" stroke="#1f55b5" stroke-width="1.6"/>
<path d="M13 13.5 L13 5.3 A8.2 8.2 0 0 1 21.2 13.5 Z" fill="#e0243c"/><path d="M13 13.5 H21.2 A8.2 8.2 0 0 1 13 21.7 Z" fill="#fff"/><path d="M13 15 H21 M13 18 H19.8" stroke="#1f55b5" stroke-width="1.6"/>
<path d="M13 13.5 H4.8 A8.2 8.2 0 0 0 13 21.7 Z" fill="#e0243c"/>
<circle cx="13" cy="13.5" r="2.6" fill="#e08a1c" stroke="#c9a227" stroke-width="0.6"/><path d="M15.6 9.4 L18.4 8.6 M8 17.6 L10.6 17" stroke="#222" stroke-width="1.1"/></g>
<g transform="translate(44.2,833)"><path d="M9.95 0.5 Q15 0.5 19.4 2.4 Q20.4 14 16.4 20.4 Q13.6 24.4 9.95 26.4 Q6.3 24.4 3.5 20.4 Q-0.5 14 0.5 2.4 Q4.9 0.5 9.95 0.5 Z" fill="#ee3e34" stroke="#9aa0a4" stroke-width="0.9"/>
<circle cx="9.6" cy="8.2" r="3" fill="#f4f4f4"/><circle cx="6" cy="4.8" r="1.7" fill="#f4f4f4" stroke="#333" stroke-width="0.5"/><circle cx="13.4" cy="4.8" r="1.7" fill="#f4f4f4" stroke="#333" stroke-width="0.5"/><circle cx="5.6" cy="10.4" r="1.4" fill="#f4f4f4" stroke="#333" stroke-width="0.5"/><circle cx="13.6" cy="10.4" r="1.4" fill="#f4f4f4" stroke="#333" stroke-width="0.5"/>
<circle cx="10.6" cy="7.6" r="1" fill="#222"/><path d="M8.6 11 L11.6 13.4 L9 14" stroke="#555" stroke-width="0.8" fill="none"/>
<circle cx="10" cy="18.6" r="4.2" fill="#f7f7f7" stroke="#666" stroke-width="0.5"/><path d="M6.6 17 Q10 15.6 13.4 17.4 M6.2 19.6 Q10 21 13.8 19.8 M9 14.8 Q8 18.6 9.6 22.6" stroke="#666" stroke-width="0.5" fill="none"/></g>
<g transform="translate(41,868)"><circle cx="13" cy="13.4" r="12.9" fill="#ee2b36"/><circle cx="13" cy="13.4" r="10.6" fill="none" stroke="#f58088" stroke-width="1.4" stroke-dasharray="1.1 0.7"/><circle cx="13" cy="12.6" r="8.6" fill="#151515"/>
<path d="M7.6 9.6 Q8.4 15.6 13.6 19.2 L15.4 20.2 L14.8 18.6 Q10.4 14.8 9.4 9 Z M18.4 9.6 Q17.6 15.6 12.4 19.2 L10.6 20.2 L11.2 18.6 Q15.6 14.8 16.6 9 Z" fill="#f4f4f4"/>
<circle cx="13" cy="8.2" r="2.2" fill="#f4f4f4"/><path d="M8.4 19.2 H11.6 M14.4 19.2 H17.6" stroke="#d8b84a" stroke-width="0.9"/><rect x="10.8" y="23.2" width="4.4" height="1.6" fill="#fbd5d8"/></g>
<g transform="translate(43.6,903.3)"><path d="M10.35 0.6 L14 3 L19.6 3.6 Q20.6 12 19.4 17 Q17.6 22.6 10.35 26 Q3.1 22.6 1.3 17 Q0.1 12 1.1 3.6 L6.7 3 Z" fill="#fff" stroke="#2a73c8" stroke-width="1.1"/>
<circle cx="7" cy="7" r="2.6" fill="none" stroke="#2a73c8" stroke-width="0.9"/><circle cx="7" cy="7" r="0.9" fill="#2a73c8"/>
<path d="M9 5 Q13.6 5.6 15.6 10.6 Q16.4 13.6 15 15.4 L11 13.6 Q8.4 11.6 8.6 9.2" fill="none" stroke="#2a73c8" stroke-width="0.9"/><path d="M9.6 13.6 L14.4 15.8" stroke="#2a73c8" stroke-width="1.2"/>
<text x="10.35" y="20.6" text-anchor="middle" style="font-size:4.6px;fill:#2a73c8;font-family:'Liberation Serif',serif">SWFC</text><path d="M8.4 22.8 H12.4" stroke="#8fb6e4" stroke-width="0.8"/></g>
<g transform="translate(43.6,938.8)"><path d="M2.6 0.5 H18.2 V15 Q18 20 10.4 23 Q2.8 20 2.6 15 Z" fill="#fff" stroke="#2a55b4" stroke-width="0.9"/>
<rect x="3" y="0.9" width="14.8" height="3.2" fill="#e23a3e"/><path d="M4.4 2.5 H16.4" stroke="#fff" stroke-width="1.1" stroke-dasharray="1.4 0.5"/>
<path d="M4.2 4.4 V18.4 M7.4 4.4 V20.6 M10.4 6.8 V21.4 M13.4 4.4 V20.6 M16.6 4.4 V18.4" stroke="#e23a3e" stroke-width="1.7"/><path d="M8.8 5.4 H12" stroke="#e23a3e" stroke-width="1.6"/>
<path d="M0 17 L3 16.4 L3.4 18.6 Q10.4 23.6 17.4 18.6 L17.8 16.4 L20.8 17 L19.6 19 L20.2 20.6 L17.6 21 Q10.4 27 3.2 21 L0.6 20.6 L1.2 19 Z" fill="#2a55b4"/><circle cx="10.4" cy="20.4" r="1.5" fill="#e8eef8"/><path d="M1 17.4 L2.8 17 L3 18.6 L1.4 18.8 Z M19.8 17.4 L18 17 L17.8 18.6 L19.4 18.8 Z" fill="#e23a3e"/></g>
<g transform="translate(40,973)"><path d="M22.6 5 Q21.6 0.8 17.6 1.2 Q14 2 15 6.4 Q16.4 10.2 21 13.4 Q25 16.6 22.6 20.4 Q25.6 19.6 25.4 16.4 Q25 12.6 20 9.2 Q16 6 17.4 3.6 Q19.2 1.6 21.4 4.2 Z" fill="#111"/>
<path d="M2.6 15.6 Q8.6 14.8 11.4 11.4 Q13.4 9.4 16 10 Q13.6 13.6 9.6 15.6 Q6 17.2 2.6 15.6 Z M5.6 18.2 Q11.6 17.4 14.6 13.6 Q16.6 11.4 19 12.4 Q16.6 16.4 12.6 18.2 Q9 19.8 5.6 18.2 Z M9.6 20.6 Q15 19.8 17.8 16 Q19.4 14 21.6 15 Q19.8 19 16 20.8 Q12.6 22.2 9.6 20.6 Z" fill="#111"/>
<path d="M1.4 19.6 Q13 29.6 26.6 18.6" stroke="#333" stroke-width="1.3" fill="none" stroke-dasharray="1 0.7"/></g>
<g transform="translate(43.1,1008.3)"><path d="M0.5 0.5 H21.3 V15 Q21 21 10.9 25.6 Q0.8 21 0.5 15 Z" fill="#fff" stroke="#16225c" stroke-width="0.9"/>
<path d="M2.6 6 V18.4 M6.6 6 V22 M10.9 6 V25 M15.2 6 V22 M19.2 6 V18.4" stroke="#16225c" stroke-width="2.1"/>
<rect x="0.5" y="0.5" width="20.8" height="6" fill="#16225c"/>
<text x="10.9" y="5.4" text-anchor="middle" textLength="18.6" lengthAdjust="spacingAndGlyphs" style="font-size:5px;font-weight:700;fill:#fff">ALBION</text>
<path d="M4.4 9 Q6.6 8 8 10 L12 13.4 L17.6 15.6 L18.4 17.2 L12.6 17 Q9.6 17.6 8.4 15 L6.6 11.4 Z" fill="#8a5a33"/>
<path d="M6 18.6 Q8.4 17 10.4 18.6 Q12.4 17 14.8 18.6 Q13.6 21.4 10.4 21.6 Q7.2 21.4 6 18.6 Z" fill="#2e9e5b"/><circle cx="10.6" cy="19" r="1" fill="#d8232a"/></g>
<g transform="translate(41,1042.8)"><circle cx="13" cy="13.6" r="12.8" fill="#fff" stroke="#3d6fc4" stroke-width="0.8"/><circle cx="13" cy="13.6" r="10.9" fill="none" stroke="#8fb0e6" stroke-width="1.7" stroke-dasharray="1.3 0.7"/><circle cx="13" cy="13.6" r="8.4" fill="#fff" stroke="#3d6fc4" stroke-width="0.8"/>
<path d="M6 8 Q4.2 13.6 6 19.2 M20 8 Q21.8 13.6 20 19.2" stroke="#3d6fc4" stroke-width="1.7" fill="none"/>
<path d="M13 6 Q16.6 5.6 17.4 8.4 Q18.6 11 16 12.2 H14 V14.6 H12 V12.2 H10 Q7.4 11 8.6 8.4 Q9.4 5.6 13 6 Z" fill="#238a4a"/>
<path d="M9.8 14.6 L11 17 L13 14.8 L15 17 L16.2 14.6 L15.6 19 H10.4 Z" fill="#c9a84a"/><path d="M10.6 20.4 H15.4" stroke="#c9a84a" stroke-width="1"/>
<circle cx="2.6" cy="13.6" r="1.2" fill="#c9a84a"/><circle cx="23.4" cy="13.6" r="1.2" fill="#c9a84a"/></g>
</svg>
<svg class="ov" width="2328" height="1319" viewBox="0 0 2328 1319">
<text x="50.93" y="188.70" style="font-size:12.2px;fill:#262626;" >A</text>
<text x="260.93" y="188.70" style="font-size:12.2px;fill:#262626;" >B</text>
<text x="503.79" y="188.70" style="font-size:12.2px;fill:#262626;" >C</text>
<text x="723.93" y="188.70" style="font-size:12.2px;fill:#262626;" >E</text>
<text x="886.77" y="188.70" style="font-size:12.2px;fill:#262626;" >F</text>
<text x="1011.76" y="188.70" style="font-size:12.2px;fill:#262626;" >G</text>
<text x="1685.59" y="188.70" style="font-size:12.2px;fill:#262626;" >H</text>
<text x="606.69" y="188.70" style="font-size:12.2px;fill:#217346;" >D</text>
<text x="6.61" y="223.50" style="font-size:12.2px;fill:#262626;" >1</text>
<text x="6.61" y="260.70" style="font-size:12.2px;fill:#262626;" >2</text>
<text x="6.61" y="295.70" style="font-size:12.2px;fill:#262626;" >3</text>
<text x="6.61" y="330.70" style="font-size:12.2px;fill:#262626;" >4</text>
<text x="6.61" y="365.70" style="font-size:12.2px;fill:#262626;" >5</text>
<text x="6.61" y="400.70" style="font-size:12.2px;fill:#262626;" >6</text>
<text x="6.61" y="435.70" style="font-size:12.2px;fill:#262626;" >7</text>
<text x="6.61" y="470.70" style="font-size:12.2px;fill:#262626;" >8</text>
<text x="6.61" y="505.70" style="font-size:12.2px;fill:#262626;" >9</text>
<text x="3.21" y="540.70" style="font-size:12.2px;fill:#262626;" >10</text>
<text x="3.21" y="575.70" style="font-size:12.2px;fill:#262626;" >11</text>
<text x="3.21" y="610.70" style="font-size:12.2px;fill:#262626;" >12</text>
<text x="3.21" y="645.70" style="font-size:12.2px;fill:#262626;" >13</text>
<text x="3.21" y="680.70" style="font-size:12.2px;fill:#262626;" >14</text>
<text x="3.21" y="715.70" style="font-size:12.2px;fill:#262626;" >15</text>
<text x="3.21" y="751.70" style="font-size:12.2px;fill:#262626;" >16</text>
<text x="3.21" y="786.70" style="font-size:12.2px;fill:#262626;" >17</text>
<text x="3.21" y="821.70" style="font-size:12.2px;fill:#262626;" >18</text>
<text x="3.21" y="856.70" style="font-size:12.2px;fill:#262626;" >19</text>
<text x="3.21" y="891.70" style="font-size:12.2px;fill:#217346;" >20</text>
<text x="3.21" y="926.70" style="font-size:12.2px;fill:#262626;" >21</text>
<text x="3.21" y="961.70" style="font-size:12.2px;fill:#262626;" >22</text>
<text x="3.21" y="996.70" style="font-size:12.2px;fill:#262626;" >23</text>
<text x="3.21" y="1031.70" style="font-size:12.2px;fill:#262626;" >24</text>
<text x="3.21" y="1066.70" style="font-size:12.2px;fill:#262626;" >25</text>
<text x="3.21" y="1093.40" style="font-size:12.2px;fill:#262626;" >26</text>
<text x="3.21" y="1113.80" style="font-size:12.2px;fill:#262626;" >27</text>
<text x="3.21" y="1133.80" style="font-size:12.2px;fill:#262626;" >28</text>
<text x="3.21" y="1153.80" style="font-size:12.2px;fill:#262626;" >29</text>
<text x="3.21" y="1186.70" style="font-size:12.2px;fill:#262626;" >30</text>
<text x="3.21" y="1213.40" style="font-size:12.2px;fill:#262626;" >31</text>
<text x="3.21" y="1238.40" style="font-size:12.2px;fill:#262626;" >32</text>
<text x="3.21" y="1258.80" style="font-size:12.2px;fill:#262626;" >33</text>
<text x="3.21" y="1278.80" style="font-size:12.2px;fill:#262626;" >34</text>
<text x="3.21" y="1298.80" style="font-size:12.2px;fill:#262626;" >35</text>
<text x="3.21" y="1318.80" style="font-size:12.2px;fill:#262626;" >36</text>
<text y="260.70" style="font-size:24px;fill:#fff;" lengthAdjust="spacing"><tspan x="91.55" textLength="63.06">Aston</tspan> <tspan x="160.72" textLength="44.88">Villa</tspan></text>
<text y="295.70" style="font-size:24px;fill:#fff;" lengthAdjust="spacing"><tspan x="90.73" textLength="133.12">Birmingham</tspan> <tspan x="229.73" textLength="41.91">City</tspan></text>
<text y="330.70" style="font-size:24px;fill:#fff;" lengthAdjust="spacing"><tspan x="90.73" textLength="108.28">Blackburn</tspan> <tspan x="205.07" textLength="73.70">Rovers</tspan></text>
<text y="365.70" style="font-size:24px;fill:#fff;" lengthAdjust="spacing"><tspan x="90.73" textLength="71.74">Bolton</tspan> <tspan x="168.63" textLength="120.04">Wanderers</tspan></text>
<text y="400.70" style="font-size:24px;fill:#fff;" lengthAdjust="spacing"><tspan x="90.73" textLength="105.92">Brentford</tspan></text>
<text y="435.70" style="font-size:24px;fill:#fff;" lengthAdjust="spacing"><tspan x="90.73" textLength="69.44">Bristol</tspan> <tspan x="166.18" textLength="41.66">City</tspan></text>
<text y="470.70" style="font-size:24px;fill:#fff;" lengthAdjust="spacing"><tspan x="90.73" textLength="65.04">Derby</tspan> <tspan x="161.58" textLength="77.47">County</tspan></text>
<text y="505.70" style="font-size:24px;fill:#fff;" lengthAdjust="spacing"><tspan x="90.73" textLength="42.56">Hull</tspan> <tspan x="139.25" textLength="41.40">City</tspan></text>
<text y="540.70" style="font-size:24px;fill:#fff;" lengthAdjust="spacing"><tspan x="90.49" textLength="82.42">Ipswich</tspan> <tspan x="178.86" textLength="60.90">Town</tspan></text>
<text y="575.70" style="font-size:24px;fill:#fff;" lengthAdjust="spacing"><tspan x="90.73" textLength="62.50">Leeds</tspan> <tspan x="159.29" textLength="73.36">United</tspan></text>
<text y="610.70" style="font-size:24px;fill:#fff;" lengthAdjust="spacing"><tspan x="90.73" textLength="166.03">Middlesbrough</tspan></text>
<text y="645.70" style="font-size:24px;fill:#fff;" lengthAdjust="spacing"><tspan x="90.73" textLength="86.07">Millwall</tspan></text>
<text y="680.70" style="font-size:24px;" lengthAdjust="spacing"><tspan x="90.73" textLength="90.18">Norwich</tspan> <tspan x="186.58" textLength="41.17">City</tspan></text>
<text y="715.70" style="font-size:24px;fill:#fff;" lengthAdjust="spacing"><tspan x="90.73" textLength="130.09">Nottingham</tspan> <tspan x="226.82" textLength="68.26">Forest</tspan></text>
<text y="750.70" style="font-size:24px;fill:#fff;" lengthAdjust="spacing"><tspan x="90.73" textLength="84.05">Preston</tspan> <tspan x="180.87" textLength="63.70">North</tspan> <tspan x="250.62" textLength="40.93">End</tspan></text>
<text y="786.70" style="font-size:24px;fill:#fff;" lengthAdjust="spacing"><tspan x="91.56" textLength="83.14">Queens</tspan> <tspan x="180.73" textLength="47.77">Park</tspan> <tspan x="234.84" textLength="87.02">Rangers</tspan></text>
<text y="821.70" style="font-size:24px;fill:#fff;" lengthAdjust="spacing"><tspan x="90.73" textLength="88.82">Reading</tspan></text>
<text y="856.70" style="font-size:24px;fill:#fff;" lengthAdjust="spacing"><tspan x="90.73" textLength="122.95">Rotherham</tspan> <tspan x="219.88" textLength="73.67">United</tspan></text>
<text y="891.70" style="font-size:24px;fill:#fff;" lengthAdjust="spacing"><tspan x="91.61" textLength="94.39">Sheffield</tspan> <tspan x="192.23" textLength="72.42">United</tspan></text>
<text y="926.70" style="font-size:24px;fill:#fff;" lengthAdjust="spacing"><tspan x="91.61" textLength="94.67">Sheffield</tspan> <tspan x="192.63" textLength="126.42">Wednesday</tspan></text>
<text y="961.70" style="font-size:24px;fill:#fff;" lengthAdjust="spacing"><tspan x="91.61" textLength="59.90">Stoke</tspan> <tspan x="156.93" textLength="40.72">City</tspan></text>
<text y="996.70" style="font-size:24px;fill:#fff;" lengthAdjust="spacing"><tspan x="91.61" textLength="92.49">Swansea</tspan> <tspan x="191.35" textLength="41.20">City</tspan></text>
<text y="1031.70" style="font-size:24px;fill:#fff;" lengthAdjust="spacing"><tspan x="91.49" textLength="56.41">West</tspan> <tspan x="154.20" textLength="110.43">Bromwich</tspan> <tspan x="270.84" textLength="70.12">Albion</tspan></text>
<text y="1066.70" style="font-size:24px;fill:#fff;" lengthAdjust="spacing"><tspan x="91.49" textLength="69.48">Wigan</tspan> <tspan x="167.17" textLength="84.66">Athletic</tspan></text>
<text x="16.12" y="22.20" style="font-size:13.2px;fill:#3b3b3b;" textLength="19.97" lengthAdjust="spacing">File</text>
<text x="70.02" y="22.20" style="font-size:13.2px;fill:#3b3b3b;" textLength="36.07" lengthAdjust="spacing">Home</text>
<text x="133.78" y="22.20" style="font-size:13.2px;fill:#3b3b3b;" textLength="33.01" lengthAdjust="spacing">Insert</text>
<text x="197.22" y="22.20" style="font-size:13.2px;fill:#3b3b3b;" textLength="71.58" lengthAdjust="spacing">Page Layout</text>
<text x="298.22" y="22.20" style="font-size:13.2px;fill:#3b3b3b;" textLength="53.76" lengthAdjust="spacing">Formulas</text>
<text x="380.32" y="22.20" style="font-size:13.2px;fill:#3b3b3b;" textLength="27.28" lengthAdjust="spacing">Data</text>
<text x="436.42" y="22.20" style="font-size:13.2px;fill:#3b3b3b;" textLength="40.55" lengthAdjust="spacing">Review</text>
<text x="505.14" y="22.20" style="font-size:13.2px;fill:#3b3b3b;" textLength="26.83" lengthAdjust="spacing">View</text>
<text x="559.42" y="22.20" style="font-size:13.2px;fill:#3b3b3b;" textLength="60.40" lengthAdjust="spacing">Developer</text>
<text x="647.42" y="22.20" style="font-size:13.2px;fill:#3b3b3b;" textLength="27.34" lengthAdjust="spacing">Help</text>
<text x="704.42" y="22.20" style="font-size:13.2px;fill:#3b3b3b;" textLength="68.88" lengthAdjust="spacing">Power Pivot</text>
<text x="831.20" y="22.20" style="font-size:13.2px;fill:#3b3b3b;" textLength="164.85" lengthAdjust="spacing">Tell me what you want to do</text>
<text x="11.70" y="84.60" style="font-size:12.2px;fill:#3b3b3b;" textLength="28.84" lengthAdjust="spacing">Paste</text>
<text x="68.98" y="51.80" style="font-size:12.2px;fill:#3b3b3b;" textLength="19.11" lengthAdjust="spacing">Cut</text>
<text x="68.98" y="75.50" style="font-size:12.2px;fill:#3b3b3b;" textLength="27.74" lengthAdjust="spacing">Copy</text>
<text x="68.60" y="99.50" style="font-size:12.2px;fill:#3b3b3b;" textLength="78.70" lengthAdjust="spacing">Format Painter</text>
<text x="44.93" y="123.60" style="font-size:11.2px;fill:#3b3b3b;" textLength="51.19" lengthAdjust="spacing">Clipboard</text>
<text x="173.08" y="59.80" style="font-size:12.2px;fill:#262626;" textLength="34.54" lengthAdjust="spacing">Calibri</text>
<text x="284.07" y="59.80" style="font-size:12.2px;fill:#262626;" textLength="12.39" lengthAdjust="spacing">14</text>
<text x="330.07" y="58.50" style="font-size:13.2px;fill:#a6a6a6;" textLength="9.05" lengthAdjust="spacing">A</text>
<text x="351.98" y="58.50" style="font-size:10.9px;fill:#a6a6a6;" textLength="7.44" lengthAdjust="spacing">A</text>
<text x="176.80" y="90.30" style="font-size:13.4px;font-weight:700;fill:#a6a6a6;" textLength="8.80" lengthAdjust="spacing">B</text>
<text x="200.00" y="90.30" style="font-size:13.8px;font-style:italic;font-family:'Liberation Serif',serif;fill:#a6a6a6;" >I</text>
<text x="219.50" y="90.30" style="font-size:13px;fill:#a6a6a6;" textLength="9.71" lengthAdjust="spacing">U</text>
<text x="340.47" y="89.70" style="font-size:15.4px;fill:#a6a6a6;" textLength="9.56" lengthAdjust="spacing">A</text>
<text x="247.78" y="123.80" style="font-size:11.2px;fill:#3b3b3b;" textLength="24.30" lengthAdjust="spacing">Font</text>
<text x="534.35" y="59.70" style="font-size:12.2px;fill:#a6a6a6;" textLength="51.44" lengthAdjust="spacing">Wrap Text</text>
<text x="533.70" y="91.70" style="font-size:12.2px;fill:#a6a6a6;" textLength="85.30" lengthAdjust="spacing">Merge &amp; Center</text>
<text x="476.38" y="123.60" style="font-size:11.2px;fill:#3b3b3b;" textLength="52.40" lengthAdjust="spacing">Alignment</text>
<text x="658.09" y="59.90" style="font-size:12.2px;fill:#a6a6a6;" textLength="40.43" lengthAdjust="spacing">General</text>
<text x="661.13" y="93.10" style="font-size:15.4px;fill:#9a9a9a;" textLength="8.71" lengthAdjust="spacing">$</text>
<text x="691.43" y="93.40" style="font-size:16px;fill:#9a9a9a;" textLength="16.54" lengthAdjust="spacing">%</text>
<text x="718.45" y="87.60" style="font-size:34px;font-weight:700;font-family:'Liberation Serif',serif;fill:#9a9a9a;" >,</text>
<text x="690.88" y="123.50" style="font-size:11.2px;fill:#3b3b3b;" textLength="41.20" lengthAdjust="spacing">Number</text>
<text x="806.68" y="84.80" style="font-size:12.2px;fill:#a6a6a6;" textLength="62.84" lengthAdjust="spacing">Conditional</text>
<text x="803.70" y="100.60" style="font-size:12.2px;fill:#a6a6a6;" textLength="59.39" lengthAdjust="spacing">Formatting</text>
<text x="875.90" y="84.80" style="font-size:12.2px;fill:#a6a6a6;" textLength="52.14" lengthAdjust="spacing">Format as</text>
<text x="884.33" y="100.60" style="font-size:12.2px;fill:#a6a6a6;" textLength="28.12" lengthAdjust="spacing">Table</text>
<text x="939.58" y="58.60" style="font-size:13.7px;fill:#7a7a7a;" textLength="46.64" lengthAdjust="spacing">Normal</text>
<text x="1045.38" y="58.60" style="font-size:13.7px;fill:#a9a5a9;" textLength="23.81" lengthAdjust="spacing">Bad</text>
<text x="1151.71" y="58.60" style="font-size:13.7px;fill:#a9a5a9;" textLength="33.47" lengthAdjust="spacing">Good</text>
<text x="1257.28" y="58.60" style="font-size:13.7px;fill:#b1adb1;" textLength="48.04" lengthAdjust="spacing">Neutral</text>
<text x="1363.74" y="58.60" style="font-size:13.7px;font-weight:700;fill:#c3c0c3;" textLength="69.51" lengthAdjust="spacing">Calculation</text>
<text x="939.94" y="86.70" style="font-size:13.7px;font-weight:700;fill:#f4f4f4;" textLength="64.63" lengthAdjust="spacing">Check Cell</text>
<text x="1046.38" y="86.70" style="font-size:13.7px;font-style:italic;fill:#b4b4b4;" textLength="88.80" lengthAdjust="spacing">Explanatory ...</text>
<text x="1151.28" y="86.70" style="font-size:13.7px;fill:#a9a5a9;" textLength="90.57" lengthAdjust="spacing">Followed Hy...</text>
<text x="1257.28" y="86.70" style="font-size:13.7px;fill:#a9a5a9;" textLength="60.60" lengthAdjust="spacing">Hyperlink</text>
<text x="1363.04" y="86.70" style="font-size:13.7px;fill:#a9a5a9;" textLength="33.86" lengthAdjust="spacing">Input</text>
<text x="1127.09" y="123.70" style="font-size:11.2px;fill:#3b3b3b;" textLength="29.01" lengthAdjust="spacing">Styles</text>
<text x="1503.57" y="84.90" style="font-size:12.2px;fill:#3b3b3b;" textLength="29.52" lengthAdjust="spacing">Insert</text>
<text x="1543.60" y="84.90" style="font-size:12.2px;fill:#3b3b3b;" textLength="33.94" lengthAdjust="spacing">Delete</text>
<text x="1583.80" y="84.90" style="font-size:12.2px;fill:#3b3b3b;" textLength="38.19" lengthAdjust="spacing">Format</text>
<text x="1549.23" y="123.70" style="font-size:11.2px;fill:#3b3b3b;" textLength="23.57" lengthAdjust="spacing">Cells</text>
<text x="1644.98" y="52.60" style="font-size:19.3px;fill:#a6a6a6;" >Σ</text>
<text x="1663.38" y="50.90" style="font-size:12.2px;fill:#a6a6a6;" textLength="49.73" lengthAdjust="spacing">AutoSum</text>
<text x="1662.80" y="73.70" style="font-size:12.2px;fill:#3b3b3b;" textLength="15.42" lengthAdjust="spacing">Fill</text>
<text x="1663.18" y="96.70" style="font-size:12.2px;fill:#3b3b3b;" textLength="27.02" lengthAdjust="spacing">Clear</text>
<text x="1740.17" y="52.60" style="font-size:15.6px;fill:#b0b0b0;" textLength="9.56" lengthAdjust="spacing">A</text>
<text x="1740.10" y="67.00" style="font-size:15.6px;fill:#b0b0b0;" textLength="9.58" lengthAdjust="spacing">Z</text>
<text x="1736.55" y="84.60" style="font-size:12.2px;fill:#a6a6a6;" textLength="34.34" lengthAdjust="spacing">Sort &amp;</text>
<text x="1736.80" y="100.60" style="font-size:12.2px;fill:#a6a6a6;" textLength="26.00" lengthAdjust="spacing">Filter</text>
<text x="1778.30" y="84.60" style="font-size:12.2px;fill:#3b3b3b;" textLength="36.49" lengthAdjust="spacing">Find &amp;</text>
<text x="1776.65" y="100.60" style="font-size:12.2px;fill:#3b3b3b;" textLength="31.34" lengthAdjust="spacing">Select</text>
<text x="1710.68" y="123.70" style="font-size:11.2px;fill:#3b3b3b;" textLength="37.34" lengthAdjust="spacing">Editing</text>
<text x="8.48" y="156.90" style="font-size:12.4px;fill:#333;" textLength="23.50" lengthAdjust="spacing">D20</text>
<text x="219.60" y="158.00" style="font-size:14.5px;font-style:italic;font-family:'Liberation Serif',serif;fill:#444;" >f</text>
<text x="224.60" y="158.40" style="font-size:9.5px;font-style:italic;font-family:'Liberation Serif',serif;fill:#444;" >x</text>
<text y="223.80" style="font-size:24px;" lengthAdjust="spacing"><tspan x="90.38" textLength="156.97">Championship</tspan> <tspan x="253.25" textLength="78.09">League</tspan> <tspan x="337.33" textLength="92.50">2018/19</tspan></text>
<text y="223.80" style="font-size:24px;" lengthAdjust="spacing"><tspan x="448.46" textLength="54.64">Time</tspan> <tspan x="509.08" textLength="54.58">Zone</tspan></text>
<text y="223.80" style="font-size:24px;" lengthAdjust="spacing"><tspan x="585.12" textLength="30.53" style="font-size:23.01px">UK</tspan></text>
<text y="223.80" style="font-size:24px;" lengthAdjust="spacing"><tspan x="655.66" textLength="83.56">Today&#x27;s</tspan> <tspan x="745.24" textLength="52.32">Date</tspan></text>
<text y="223.80" style="font-size:24px;" lengthAdjust="spacing"><tspan x="809.47" textLength="132.67">12/26/2018</tspan></text>
<text y="223.80" style="font-size:26px;" lengthAdjust="spacing"><tspan x="980.60" textLength="140.08">Instructions</tspan> <tspan x="1127.83" textLength="45.94">(rev</tspan> <tspan x="1181.08" textLength="53.19">1.1):</tspan></text>
<text x="1042.49" y="260.80" style="font-size:18px;" >1</text>
<text y="260.80" style="font-size:18px;" lengthAdjust="spacing"><tspan x="1068.32" textLength="57.62">Enable</tspan> <tspan x="1130.88" textLength="54.98">Macro</tspan> <tspan x="1190.86" textLength="47.12">when</tspan> <tspan x="1243.12" textLength="90.92">prompted.</tspan></text>
<text x="1042.49" y="295.80" style="font-size:18px;" >2</text>
<text y="295.80" style="font-size:18px;" lengthAdjust="spacing"><tspan x="1068.98" textLength="51.28">Select</tspan> <tspan x="1125.32" textLength="38.74">your</tspan> <tspan x="1168.99" textLength="39.03">time</tspan> <tspan x="1212.61" textLength="41.00">zone</tspan> <tspan x="1258.24" textLength="15.81">in</tspan> <tspan x="1278.68" textLength="31.20">Cell</tspan> <tspan x="1314.88" textLength="23.54">D1</tspan> <tspan x="1343.24" textLength="21.98">on</tspan> <tspan x="1371.14" textLength="107.94">&quot;Dashboard&quot;</tspan> <tspan x="1484.45" textLength="33.59">tab.</tspan></text>
<text x="1042.49" y="330.80" style="font-size:18px;" >3</text>
<text y="330.80" style="font-size:18px;" lengthAdjust="spacing"><tspan x="1069.40" textLength="41.05">Type</tspan> <tspan x="1115.02" textLength="15.69">in</tspan> <tspan x="1135.73" textLength="53.39">scores</tspan> <tspan x="1193.79" textLength="15.69">in</tspan> <tspan x="1215.33" textLength="78.89">&quot;fixtures&quot;</tspan> <tspan x="1299.53" textLength="33.31">tab.</tspan></text>
<text x="1042.49" y="365.80" style="font-size:18px;" >4</text>
<text y="365.80" style="font-size:18px;" lengthAdjust="spacing"><tspan x="1068.32" textLength="84.72">Definition</tspan> <tspan x="1157.95" textLength="17.38">of</tspan> <tspan x="1180.59" textLength="72.16">buttons:</tspan></text>
<text x="1042.49" y="610.80" style="font-size:18px;" >4</text>
<text y="610.80" style="font-size:18px;" lengthAdjust="spacing"><tspan x="1068.89" textLength="38.94">Click</tspan> <tspan x="1112.83" textLength="21.84">on</tspan> <tspan x="1139.50" textLength="32.37">one</tspan> <tspan x="1176.55" textLength="17.19">of</tspan> <tspan x="1198.70" textLength="28.29">the</tspan> <tspan x="1231.75" textLength="51.70">above</tspan> <tspan x="1288.19" textLength="45.94">three</tspan> <tspan x="1339.11" textLength="65.64">buttons</tspan> <tspan x="1409.52" textLength="21.84">on</tspan> <tspan x="1437.24" textLength="107.25">&quot;Dashboard&quot;</tspan> <tspan x="1549.74" textLength="18.15">or</tspan> <tspan x="1573.77" textLength="61.41">&quot;Table&quot;</tspan> <tspan x="1640.50" textLength="33.38">tab.</tspan>  <tspan x="1682.90" textLength="31.70">The</tspan> <tspan x="1719.48" textLength="112.46">spreadsheets</tspan> <tspan x="1836.95" textLength="28.73">will</tspan> <tspan x="1870.80" textLength="65.65">update.</tspan></text>
<text x="1042.49" y="645.80" style="font-size:18px;" >5</text>
<text y="645.80" style="font-size:18px;" lengthAdjust="spacing"><tspan x="1069.40" textLength="31.86">The</tspan> <tspan x="1106.23" textLength="52.77">points</tspan> <tspan x="1163.80" textLength="17.27">of</tspan> <tspan x="1186.40" textLength="22.50">(3)</tspan> <tspan x="1214.13" textLength="52.30">teams</tspan> <tspan x="1271.32" textLength="27.72">are</tspan> <tspan x="1304.02" textLength="61.76">plotted</tspan> <tspan x="1370.97">.</tspan>  <tspan x="1385.20" textLength="32.44">You</tspan> <tspan x="1422.56" textLength="29.86">can</tspan> <tspan x="1457.21" textLength="61.32">change</tspan> <tspan x="1523.31" textLength="52.30">teams</tspan> <tspan x="1580.39" textLength="41.36">from</tspan> <tspan x="1626.71" textLength="28.43">the</tspan> <tspan x="1660.12" textLength="31.06">pull</tspan> <tspan x="1696.22" textLength="47.95">down</tspan> <tspan x="1749.31" textLength="30.09">list.</tspan>  <tspan x="1788.40" textLength="39.13">Click</tspan> <tspan x="1832.56" textLength="21.94">on</tspan> <tspan x="1859.43" textLength="28.43">the</tspan> <tspan x="1893.61" textLength="70.35">&quot;Update</tspan> <tspan x="1968.69" textLength="41.54">Plot&quot;</tspan> <tspan x="2015.83" textLength="57.71">button</tspan> <tspan x="2078.46" textLength="17.99">to</tspan> <tspan x="2101.30" textLength="60.46">update</tspan> <tspan x="2166.53" textLength="28.43">the</tspan> <tspan x="2199.60" textLength="49.84">chart.</tspan></text>
<text x="1042.49" y="680.80" style="font-size:18px;" >6</text>
<text y="680.80" style="font-size:18px;" lengthAdjust="spacing"><tspan x="1068.98" textLength="39.68">Save</tspan> <tspan x="1113.41" textLength="28.30">the</tspan> <tspan x="1146.59" textLength="104.14">spreadsheet</tspan> <tspan x="1255.91" textLength="46.86">when</tspan> <tspan x="1307.67" textLength="31.10">you</tspan> <tspan x="1343.81" textLength="27.60">are</tspan> <tspan x="1376.07" textLength="48.82">done.</tspan>  <tspan x="1434.29" textLength="47.51">Make</tspan> <tspan x="1486.68" textLength="36.60">sure</tspan> <tspan x="1528.03" textLength="17.91">to</tspan> <tspan x="1550.87" textLength="37.78">save</tspan> <tspan x="1593.24" textLength="15.73">in</tspan> <tspan x="1613.79" textLength="42.91">Excel</tspan> <tspan x="1662.01" textLength="53.44">macro</tspan> <tspan x="1720.59" textLength="66.13">(*.xlsm)</tspan> <tspan x="1791.83" textLength="63.82">format.</tspan></text>
<text x="1042.49" y="715.80" style="font-size:18px;" >7</text>
<text y="715.80" style="font-size:18px;" lengthAdjust="spacing"><tspan x="1069.40" textLength="51.77">Thank</tspan> <tspan x="1126.27" textLength="31.30">you</tspan> <tspan x="1162.65" textLength="31.71">and</tspan> <tspan x="1199.32" textLength="42.84">good</tspan> <tspan x="1247.52" textLength="33.70">luck</tspan> <tspan x="1286.25" textLength="21.98">on</tspan> <tspan x="1313.16" textLength="38.75">your</tspan> <tspan x="1356.75" textLength="66.69">favorite</tspan> <tspan x="1428.18" textLength="67.83">Premier</tspan> <tspan x="1500.80" textLength="60.79">League</tspan> <tspan x="1566.38" textLength="58.75">teams!</tspan></text>
<text y="401.10" style="font-size:14.4px;font-weight:700;" lengthAdjust="spacing"><tspan x="1068.05" textLength="57.81">&quot;Update</tspan> <tspan x="1129.27" textLength="18.46">All</tspan> <tspan x="1151.50" textLength="56.92">Without</tspan> <tspan x="1211.89" textLength="33.84">Auto</tspan> <tspan x="1249.32" textLength="31.96">Fill&quot;:</tspan>  <tspan x="1288.44" textLength="57.39">Updates</tspan> <tspan x="1349.39" textLength="45.50">league</tspan> <tspan x="1398.60" textLength="35.11">table</tspan> <tspan x="1437.55" textLength="30.87">with</tspan> <tspan x="1472.09" textLength="22.90">the</tspan> <tspan x="1498.64" textLength="43.39">scores</tspan> <tspan x="1545.57" textLength="28.41">that</tspan> <tspan x="1577.94" textLength="22.15">are</tspan> <tspan x="1604.00" textLength="51.03">already</tspan> <tspan x="1658.48" textLength="13.22">in</tspan> <tspan x="1675.39" textLength="22.90">the</tspan> <tspan x="1702.12" textLength="66.04">&quot;fixtures&quot;</tspan> <tspan x="1772.42" textLength="27.18">tab.</tspan></text>
<text y="436.10" style="font-size:14.4px;font-weight:700;" lengthAdjust="spacing"><tspan x="1068.05" textLength="57.87">&quot;Update</tspan> <tspan x="1129.34" textLength="18.47">All</tspan> <tspan x="1151.59" textLength="33.61">With</tspan> <tspan x="1188.56" textLength="33.88">Auto</tspan> <tspan x="1226.03" textLength="31.99">Fill&quot;:</tspan>  <tspan x="1264.82" textLength="96.21">Automatically</tspan> <tspan x="1364.69" textLength="24.25">fills</tspan> <tspan x="1392.22" textLength="13.23">in</tspan> <tspan x="1409.14" textLength="22.93">the</tspan> <tspan x="1435.72" textLength="43.44">scores</tspan> <tspan x="1482.44" textLength="13.23">in</tspan> <tspan x="1499.36" textLength="22.93">the</tspan> <tspan x="1526.12" textLength="66.10">&quot;fixtures&quot;</tspan> <tspan x="1596.49" textLength="22.86">tab</tspan> <tspan x="1623.16" textLength="25.67">and</tspan> <tspan x="1652.60" textLength="31.83">then</tspan> <tspan x="1688.11" textLength="55.60">updates</tspan> <tspan x="1747.27" textLength="45.54">league</tspan> <tspan x="1796.53" textLength="39.58">table.</tspan>  <tspan x="1843.74" textLength="9.89">It</tspan> <tspan x="1857.53" textLength="24.41">will</tspan> <tspan x="1885.71" textLength="23.36">not</tspan> <tspan x="1912.75" textLength="55.84">changes</tspan> <tspan x="1972.13" textLength="22.93">the</tspan> <tspan x="1998.71" textLength="43.44">scores</tspan> <tspan x="2045.69" textLength="28.44">that</tspan> <tspan x="2078.09" textLength="22.17">are</tspan> <tspan x="2104.09" textLength="63.34">manually</tspan> <tspan x="2171.12" textLength="58.77">entered.</tspan></text>
<text y="471.10" style="font-size:14.4px;font-weight:700;" lengthAdjust="spacing"><tspan x="1068.05" textLength="55.29">&quot;Predict</tspan> <tspan x="1127.02" textLength="48.26">League</tspan> <tspan x="1178.99" textLength="49.44">Table&quot;:</tspan>  <tspan x="1235.38" textLength="39.92">Starts</tspan> <tspan x="1278.99" textLength="45.79">Monte</tspan> <tspan x="1328.24" textLength="35.81">Carlo</tspan> <tspan x="1367.58" textLength="73.60">Simulation</tspan> <tspan x="1444.80" textLength="14.00">of</tspan> <tspan x="1462.57" textLength="22.79">the</tspan> <tspan x="1489.13" textLength="57.11">2018/19</tspan> <tspan x="1549.67" textLength="51.61">season.</tspan>  <tspan x="1608.57" textLength="48.82">Specify</tspan> <tspan x="1661.14" textLength="53.82">number</tspan> <tspan x="1718.63" textLength="14.00">of</tspan> <tspan x="1736.36" textLength="30.25">runs</tspan> <tspan x="1769.86" textLength="13.16">in</tspan> <tspan x="1786.58" textLength="23.35">cell</tspan> <tspan x="1813.70" textLength="42.90">&quot;F14&quot;.</tspan> <tspan x="1860.27" textLength="49.33">Results</tspan> <tspan x="1913.24" textLength="24.26">will</tspan> <tspan x="1941.23" textLength="17.03">be</tspan> <tspan x="1961.87" textLength="45.36">shown</tspan> <tspan x="2010.62" textLength="13.16">in</tspan> <tspan x="2027.55" textLength="30.38">&quot;MC</tspan> <tspan x="2061.30" textLength="80.09">Summary2&quot;</tspan> <tspan x="2145.62" textLength="29.47">Tab.</tspan></text>
<text y="506.10" style="font-size:14.4px;font-weight:700;fill:#0f6fc0;" lengthAdjust="spacing"><tspan x="1068.44" textLength="25.29">The</tspan> <tspan x="1097.49" textLength="58.68">program</tspan> <tspan x="1159.99" textLength="24.32">will</tspan> <tspan x="1188.10" textLength="51.87">&quot;guess&quot;</tspan>  <tspan x="1247.87" textLength="43.29">scores</tspan> <tspan x="1294.62" textLength="19.98">for</tspan> <tspan x="1318.32" textLength="22.85">the</tspan> <tspan x="1344.84" textLength="44.08">empty</tspan> <tspan x="1392.52" textLength="30.13">cells</tspan> <tspan x="1425.91" textLength="13.19">in</tspan> <tspan x="1442.77" textLength="22.85">the</tspan> <tspan x="1469.44" textLength="48.05">&quot;Home</tspan> <tspan x="1521.05" textLength="38.34">Goal&quot;</tspan> <tspan x="1563.83" textLength="25.59">and</tspan> <tspan x="1593.27" textLength="45.30">&quot;Away</tspan> <tspan x="1642.14" textLength="38.34">Goal&quot;</tspan> <tspan x="1684.63" textLength="61.95">columns.</tspan>  <tspan x="1754.17" textLength="64.04">Manually</tspan> <tspan x="1821.88" textLength="54.10">entered</tspan> <tspan x="1879.66" textLength="43.29">scores</tspan> <tspan x="1926.66" textLength="22.10">are</tspan> <tspan x="1952.40" textLength="30.37">final</tspan> <tspan x="1986.63" textLength="25.59">and</tspan> <tspan x="2016.09" textLength="24.32">will</tspan> <tspan x="2044.16" textLength="17.07">be</tspan> <tspan x="2064.84" textLength="57.69">changed</tspan> <tspan x="2126.21" textLength="45.08">during</tspan> <tspan x="2174.13" textLength="76.96">simulation.</tspan></text>
<text y="541.10" style="font-size:14.4px;font-weight:700;fill:#0f6fc0;" lengthAdjust="spacing"><tspan x="1067.64" textLength="13.11">In</tspan> <tspan x="1084.52" textLength="34.43">most</tspan> <tspan x="1122.62" textLength="40.93">cases,</tspan> <tspan x="1167.28" textLength="25.27">250</tspan> <tspan x="1195.96" textLength="30.37">runs</tspan> <tspan x="1229.99" textLength="24.36">will</tspan> <tspan x="1257.97" textLength="33.10">yield</tspan> <tspan x="1294.53">a</tspan> <tspan x="1306.66" textLength="39.36">result</tspan> <tspan x="1349.78" textLength="28.38">that</tspan> <tspan x="1381.72" textLength="11.01" style="font-size:13.77px">is</tspan> <tspan x="1396.42" textLength="43.74">within</tspan> <tspan x="1443.54" textLength="29.02">+/-2</tspan> <tspan x="1476.32" textLength="43.04">points</tspan> <tspan x="1522.90" textLength="14.67">to</tspan> <tspan x="1541.21" textLength="22.88">the</tspan> <tspan x="1568.03" textLength="46.10">10,000</tspan> <tspan x="1617.54" textLength="23.66">run</tspan> <tspan x="1644.83" textLength="50.42">results.</tspan>  <tspan x="1702.89">I</tspan> <tspan x="1710.72" textLength="51.69">suggest</tspan> <tspan x="1766.12" textLength="25.56">you</tspan> <tspan x="1795.36" textLength="32.05">start</tspan> <tspan x="1831.30" textLength="30.85">with</tspan> <tspan x="1865.51">a</tspan> <tspan x="1877.61" textLength="36.35">small</tspan> <tspan x="1917.60" textLength="23.66">run</tspan> <tspan x="1944.93" textLength="14.67">to</tspan> <tspan x="1963.05" textLength="32.29">gage</tspan> <tspan x="1999.07" textLength="29.92">how</tspan> <tspan x="2032.89" textLength="37.97">much</tspan> <tspan x="2074.52" textLength="31.50">time</tspan> <tspan x="2109.52" textLength="11.01" style="font-size:13.77px">is</tspan> <tspan x="2124.17" textLength="55.83">needed.</tspan></text>
<text y="576.10" style="font-size:14.4px;font-weight:700;fill:#0f6fc0;" lengthAdjust="spacing"><tspan x="1068.35" textLength="26.73">You</tspan> <tspan x="1098.98" textLength="29.43">may</tspan> <tspan x="1132.06" textLength="30.34">stop</tspan> <tspan x="1166.05" textLength="23.00">the</tspan> <tspan x="1192.75" textLength="23.77">run</tspan> <tspan x="1220.41" textLength="13.69">at</tspan> <tspan x="1238.09" textLength="24.76">any</tspan> <tspan x="1266.57" textLength="36.11">time.</tspan>  <tspan x="1310.15" textLength="25.45">The</tspan> <tspan x="1339.30" textLength="46.41">results</tspan> <tspan x="1389.26" textLength="17.90">up</tspan> <tspan x="1410.81" textLength="14.74">to</tspan> <tspan x="1429.21" textLength="23.00">the</tspan> <tspan x="1455.88" textLength="30.34">stop</tspan> <tspan x="1489.93" textLength="36.41">point</tspan> <tspan x="1530.25" textLength="24.48">will</tspan> <tspan x="1558.52" textLength="17.18">be</tspan> <tspan x="1579.56" textLength="50.98">written</tspan> <tspan x="1634.23" textLength="14.74">to</tspan> <tspan x="1652.64" textLength="23.00">the</tspan> <tspan x="1679.49" textLength="30.66">&quot;MC</tspan> <tspan x="1713.57" textLength="80.85">Summary2&quot;</tspan> <tspan x="1798.70" textLength="27.29">tab.</tspan></text>
<text y="751.00" style="font-size:14.4px;font-weight:700;" lengthAdjust="spacing"><tspan x="2009.54" textLength="48.13">Fixture</tspan> <tspan x="2061.34" textLength="31.17">date</tspan> <tspan x="2096.42" textLength="25.69">and</tspan> <tspan x="2125.88" textLength="31.59">time</tspan> <tspan x="2161.38" textLength="22.19">are</tspan> <tspan x="2187.22" textLength="49.57">subject</tspan> <tspan x="2240.58" textLength="14.71">to</tspan> <tspan x="2258.85" textLength="53.55">change.</tspan></text>
<text y="646.20" style="font-size:12px;font-weight:700;" lengthAdjust="spacing"><tspan x="807.70" textLength="45.29">Number</tspan> <tspan x="855.94" textLength="11.36">of</tspan> <tspan x="870.34" textLength="39.19">Repeat</tspan> <tspan x="912.59" textLength="31.01" style="font-size:11.46px">Runs:</tspan></text>
<text y="680.70" style="font-size:24px;" lengthAdjust="spacing"><tspan x="809.39" textLength="42.84">250</tspan></text>
<text y="1186.90" style="font-size:24px;" lengthAdjust="spacing"><tspan x="26.55" textLength="69.55">Useful</tspan> <tspan x="102.84" textLength="56.45">links:</tspan></text>
<text x="50.16" y="1213.80" style="font-size:17.4px;" >1</text>
<text x="49.96" y="1238.40" style="font-size:17.4px;" >2</text>
<text y="1213.80" style="font-size:17.4px;fill:#0563c1;" lengthAdjust="spacing"><tspan x="89.09" textLength="461.81">https://www.tangfamily.me/predicting-the-premier-league/</tspan></text>
<text y="1238.40" style="font-size:17.4px;fill:#0563c1;" lengthAdjust="spacing"><tspan x="89.09" textLength="553.91">https://projects.fivethirtyeight.com/soccer-predictions/premier-league/</tspan></text>
<text y="421.80" style="font-size:18.3px;" lengthAdjust="spacing"><tspan x="506.39" textLength="65.24">Update</tspan> <tspan x="576.56" textLength="22.16">All</tspan></text>
<text y="447.40" style="font-size:18.3px;" lengthAdjust="spacing"><tspan x="501.40" textLength="25.26">No</tspan> <tspan x="531.62" textLength="42.42">Auto</tspan> <tspan x="578.90" textLength="24.52">Fill</tspan></text>
<text y="511.90" style="font-size:18.3px;" lengthAdjust="spacing"><tspan x="505.99" textLength="65.10">Update</tspan> <tspan x="576.01" textLength="22.12">All</tspan></text>
<text y="537.50" style="font-size:18.3px;" lengthAdjust="spacing"><tspan x="493.62" textLength="42.09">With</tspan> <tspan x="540.69" textLength="41.90">Auto</tspan> <tspan x="587.37" textLength="24.25">Fill</tspan></text>
<text y="617.70" style="font-size:18.3px;" lengthAdjust="spacing"><tspan x="457.80" textLength="61.21">Predict</tspan> <tspan x="524.03" textLength="61.91">League</tspan> <tspan x="590.57" textLength="47.64">Table</tspan></text>
<text y="790.10" style="font-size:17.2px;font-weight:700;" lengthAdjust="spacing"><tspan x="985.45" textLength="93.08">Background</tspan></text>
<text y="825.60" style="font-size:17.2px;" lengthAdjust="spacing"><tspan x="986.17" textLength="43.30">“Auto</tspan> <tspan x="1033.47" textLength="28.66">Fill”</tspan> <tspan x="1066.76" textLength="11.67">is</tspan> <tspan x="1082.84" textLength="44.52">based</tspan> <tspan x="1131.71" textLength="19.58">on</tspan> <tspan x="1155.55" textLength="25.26">the</tspan> <tspan x="1184.82" textLength="60.38">concept</tspan> <tspan x="1249.76" textLength="71.47">proposed</tspan> <tspan x="1325.83" textLength="17.87">by</tspan> <tspan x="1348.21" textLength="188.54">www.fivethirtyeight.com</tspan> <tspan x="1541.05" textLength="16.01">to</tspan> <tspan x="1561.38" textLength="53.19">predict</tspan> <tspan x="1619.02" textLength="25.26">the</tspan> <tspan x="1648.35" textLength="67.63">outcome</tspan> <tspan x="1720.04" textLength="15.35">of</tspan> <tspan x="1739.69" textLength="35.78">each</tspan> <tspan x="1779.55" textLength="46.88">game.</tspan> <tspan x="1830.22" textLength="10.77">It</tspan> <tspan x="1845.43" textLength="40.69">relies</tspan> <tspan x="1890.29" textLength="19.58">on</tspan> <tspan x="1914.13" textLength="25.26">the</tspan> <tspan x="1943.21" textLength="49.95">Soccer</tspan> <tspan x="1997.36" textLength="48.38">Power</tspan> <tspan x="2049.95" textLength="41.53">Index</tspan> <tspan x="2096.06" textLength="33.33" style="font-size:16.0px">(SPI)</tspan> <tspan x="2134.01" textLength="16.01">to</tspan> <tspan x="2154.12" textLength="66.32">estimate</tspan> <tspan x="2224.60" textLength="25.26">the</tspan></text>
<text y="848.37" style="font-size:17.2px;" lengthAdjust="spacing"><tspan x="986.32" textLength="63.58">strength</tspan> <tspan x="1054.08" textLength="15.37">of</tspan> <tspan x="1073.76" textLength="35.82">each</tspan> <tspan x="1113.85" textLength="44.22">team.</tspan>  <tspan x="1166.09" textLength="42.83">Using</tspan> <tspan x="1212.39" textLength="25.29">the</tspan> <tspan x="1241.97" textLength="41.78">latest</tspan> <tspan x="1287.93" textLength="23.02" style="font-size:16.0px">SPI</tspan> <tspan x="1315.31" textLength="47.75">values</tspan> <tspan x="1367.30" textLength="28.22">and</tspan> <tspan x="1399.95" textLength="71.61">assuming</tspan> <tspan x="1475.14" textLength="48.30">soccer</tspan> <tspan x="1527.88" textLength="54.84">scoring</tspan> <tspan x="1586.12" textLength="54.41">follows</tspan> <tspan x="1644.66" textLength="57.86">Poisson</tspan> <tspan x="1706.69" textLength="92.91">distribution,</tspan> <tspan x="1803.70" textLength="22.42">we</tspan> <tspan x="1831.26" textLength="56.25">“guess”</tspan> <tspan x="1892.36" textLength="25.29">the</tspan> <tspan x="1921.73" textLength="67.71">outcome</tspan> <tspan x="1993.51" textLength="15.37">of</tspan> <tspan x="2013.18" textLength="35.82">each</tspan> <tspan x="2053.09" textLength="42.00">game</tspan> <tspan x="2099.40" textLength="17.89">by</tspan> <tspan x="2121.61" textLength="40.60">using</tspan> <tspan x="2165.67" textLength="59.49">random</tspan> <tspan x="2229.55" textLength="72.00">numbers,</tspan></text>
<text y="871.14" style="font-size:17.2px;" lengthAdjust="spacing"><tspan x="986.74" textLength="32.28">very</tspan> <tspan x="1023.50" textLength="41.96">much</tspan> <tspan x="1069.84" textLength="26.11">like</tspan> <tspan x="1100.10" textLength="68.96">throwing</tspan> <tspan x="1171.58">a</tspan> <tspan x="1185.51" textLength="36.16">dice.</tspan></text>
<text y="916.68" style="font-size:17.2px;" lengthAdjust="spacing"><tspan x="986.17" textLength="43.31">“Auto</tspan> <tspan x="1033.48" textLength="28.66">Fill”</tspan> <tspan x="1066.99" textLength="33.21">runs</tspan> <tspan x="1104.45" textLength="60.46">through</tspan> <tspan x="1169.18" textLength="25.27">the</tspan> <tspan x="1198.71" textLength="52.06">season</tspan> <tspan x="1254.94" textLength="41.72">once.</tspan>  <tspan x="1304.56" textLength="28.32">The</tspan> <tspan x="1336.83" textLength="53.95">League</tspan> <tspan x="1394.93" textLength="38.43">table</tspan> <tspan x="1437.32" textLength="14.16">in</tspan> <tspan x="1455.75" textLength="25.27">the</tspan> <tspan x="1486.15" textLength="55.14">“Table”</tspan> <tspan x="1546.14" textLength="24.88">tab</tspan> <tspan x="1575.02" textLength="11.68">is</tspan> <tspan x="1590.92" textLength="63.19">updated</tspan> <tspan x="1658.71" textLength="44.53">based</tspan> <tspan x="1707.59" textLength="19.58">on</tspan> <tspan x="1731.44" textLength="25.27">the</tspan> <tspan x="1760.68" textLength="61.23">guessed</tspan> <tspan x="1826.46" textLength="52.77">scores.</tspan>  <tspan x="1888.33" textLength="43.31">“Auto</tspan> <tspan x="1935.64" textLength="28.66">Fill”</tspan> <tspan x="1969.31" textLength="25.67">will</tspan> <tspan x="1999.50" textLength="25.45">not</tspan> <tspan x="2029.24" textLength="54.46">change</tspan> <tspan x="2087.84" textLength="26.94">any</tspan> <tspan x="2119.27" textLength="68.81">manually</tspan> <tspan x="2192.32" textLength="59.80">entered</tspan> <tspan x="2256.68" textLength="47.74">scores</tspan></text>
<text y="939.45" style="font-size:17.2px;" lengthAdjust="spacing"><tspan x="985.65" textLength="14.16">in</tspan> <tspan x="1004.07" textLength="25.27">the</tspan> <tspan x="1033.41" textLength="49.79">fixture</tspan> <tspan x="1087.36" textLength="29.85">tab.</tspan>  <tspan x="1125.20" textLength="10.77">It</tspan> <tspan x="1140.33" textLength="32.17">only</tspan> <tspan x="1176.76" textLength="25.74">fills</tspan> <tspan x="1206.75" textLength="25.27">the</tspan> <tspan x="1236.32" textLength="40.67">blank</tspan> <tspan x="1281.34" textLength="32.98">cells</tspan> <tspan x="1318.37" textLength="14.16">in</tspan> <tspan x="1336.79" textLength="25.27">the</tspan> <tspan x="1367.04" textLength="52.10">&quot;Home</tspan> <tspan x="1423.08" textLength="41.85">Goal&quot;</tspan> <tspan x="1469.59" textLength="28.18">and</tspan> <tspan x="1503.06" textLength="47.79">&quot;Away</tspan> <tspan x="1554.98" textLength="41.85">Goal&quot;</tspan> <tspan x="1601.35" textLength="63.63">columns</tspan> <tspan x="1669.03" textLength="14.16">in</tspan> <tspan x="1687.45" textLength="25.27">the</tspan> <tspan x="1717.70" textLength="63.25">&quot;fixture&quot;</tspan> <tspan x="1785.63" textLength="29.85">tab.</tspan> <tspan x="1819.27" textLength="10.27">If</tspan> <tspan x="1833.94" textLength="27.77">you</tspan> <tspan x="1866.26" textLength="37.74">want</tspan> <tspan x="1908.44" textLength="16.01">to</tspan> <tspan x="1928.65" textLength="25.93">run</tspan> <tspan x="1959.83" textLength="43.30">“Auto</tspan> <tspan x="2007.13" textLength="28.66">Fill”</tspan> <tspan x="2040.47" textLength="107.36">consecutively,</tspan> <tspan x="2151.77" textLength="27.77">you</tspan> <tspan x="2184.06" textLength="37.69">must</tspan> <tspan x="2226.34" textLength="68.79">manually</tspan></text>
<text y="962.22" style="font-size:17.2px;" lengthAdjust="spacing"><tspan x="986.08" textLength="48.14">delete</tspan> <tspan x="1038.37" textLength="25.28">the</tspan> <tspan x="1067.92" textLength="47.76">scores</tspan> <tspan x="1119.73" textLength="14.16">in</tspan> <tspan x="1138.16" textLength="25.28">the</tspan> <tspan x="1168.43" textLength="52.13">&quot;Home</tspan> <tspan x="1224.50" textLength="41.88">Goal&quot;</tspan> <tspan x="1271.04" textLength="28.20">and</tspan> <tspan x="1304.53" textLength="47.82">&quot;Away</tspan> <tspan x="1356.48" textLength="41.88">Goal&quot;</tspan> <tspan x="1402.88" textLength="63.66">columns</tspan> <tspan x="1470.60" textLength="14.16">in</tspan> <tspan x="1490.01" textLength="70.89">“fixtures”</tspan> <tspan x="1565.75" textLength="24.89">tab</tspan> <tspan x="1594.64" textLength="14.16">in</tspan> <tspan x="1613.22" textLength="66.56">between</tspan> <tspan x="1684.05" textLength="25.28">the</tspan> <tspan x="1714.47" textLength="43.33">“Auto</tspan> <tspan x="1761.80" textLength="28.67">Fill”</tspan> <tspan x="1795.31" textLength="38.26">runs.</tspan></text>
<text y="1007.76" style="font-size:17.2px;" lengthAdjust="spacing"><tspan x="986.07" textLength="59.89">&quot;Predict</tspan> <tspan x="1050.21" textLength="54.05">League</tspan> <tspan x="1108.21" textLength="48.49">Table&quot;</tspan> <tspan x="1161.39" textLength="33.27">runs</tspan> <tspan x="1198.92" textLength="60.57">through</tspan> <tspan x="1263.77" textLength="25.32">the</tspan> <tspan x="1293.36" textLength="52.15">season</tspan> <tspan x="1349.93" textLength="62.63">multiple</tspan> <tspan x="1416.72" textLength="46.90">times.</tspan>  <tspan x="1471.63" textLength="10.29">If</tspan> <tspan x="1486.50" textLength="22.44">we</tspan> <tspan x="1513.21" textLength="22.42">set</tspan> <tspan x="1540.08" textLength="25.32">the</tspan> <tspan x="1570.40" textLength="59.93">&quot;Repeat</tspan> <tspan x="1634.67" textLength="29.72">Run</tspan> <tspan x="1668.55" textLength="69.28">Number&quot;</tspan> <tspan x="1742.52" textLength="16.04">to</tspan> <tspan x="1763.02" textLength="56.47">10,000,</tspan> <tspan x="1823.44" textLength="34.98">then</tspan> <tspan x="1862.70" textLength="25.32">the</tspan> <tspan x="1892.30" textLength="64.89">program</tspan> <tspan x="1961.50" textLength="33.27">runs</tspan> <tspan x="1999.03" textLength="60.57">through</tspan> <tspan x="2063.87" textLength="25.32">the</tspan> <tspan x="2093.46" textLength="52.15">season</tspan> <tspan x="2150.14" textLength="51.70">10,000</tspan> <tspan x="2205.91" textLength="46.90">times.</tspan>  <tspan x="2260.93" textLength="16.76">At</tspan> <tspan x="2282.15" textLength="25.32">the</tspan></text>
<text y="1030.53" style="font-size:17.2px;" lengthAdjust="spacing"><tspan x="986.07" textLength="28.62">end</tspan> <tspan x="1019.04" textLength="15.36">of</tspan> <tspan x="1038.80" textLength="30.91">run,</tspan> <tspan x="1073.53" textLength="35.79">each</tspan> <tspan x="1113.43" textLength="43.11">club&#x27;s</tspan> <tspan x="1160.91" textLength="46.89">points</tspan> <tspan x="1212.04" textLength="24.68">are</tspan> <tspan x="1240.86" textLength="74.65">averaged.</tspan>  <tspan x="1323.41" textLength="28.32">The</tspan> <tspan x="1355.88" textLength="33.28">rank</tspan> <tspan x="1393.46" textLength="11.68">is</tspan> <tspan x="1409.39" textLength="34.92">then</tspan> <tspan x="1448.48" textLength="59.74">decided</tspan> <tspan x="1512.59" textLength="36.75">from</tspan> <tspan x="1553.64" textLength="25.27">the</tspan> <tspan x="1583.05" textLength="69.43">averaged</tspan> <tspan x="1657.05" textLength="51.92">points.</tspan></text>
<text y="1076.07" style="font-size:17.2px;" lengthAdjust="spacing"><tspan x="986.07" textLength="78.84">&quot;Predicted</tspan> <tspan x="1069.17" textLength="52.65">Home&quot;</tspan> <tspan x="1126.48" textLength="28.21">and</tspan> <tspan x="1159.98" textLength="78.84">&quot;Predicted</tspan> <tspan x="1243.26" textLength="48.35">Away&quot;</tspan> <tspan x="1296.14" textLength="63.69">columns</tspan> <tspan x="1364.21" textLength="21.65">list</tspan> <tspan x="1390.31" textLength="25.29">the</tspan> <tspan x="1419.88" textLength="72.27">predicted</tspan> <tspan x="1496.70" textLength="47.78">scores</tspan> <tspan x="1548.65" textLength="15.37">of</tspan> <tspan x="1568.32" textLength="35.81">each</tspan> <tspan x="1608.33" textLength="54.77">fixture.</tspan>   <tspan x="1675.31" textLength="48.08">Unlike</tspan> <tspan x="1727.55" textLength="25.29">the</tspan> <tspan x="1757.10" textLength="47.78">scores</tspan> <tspan x="1808.94" textLength="77.59">generated</tspan> <tspan x="1890.88" textLength="49.63">during</tspan> <tspan x="1944.82" textLength="43.16">&quot;Auto</tspan> <tspan x="1991.99" textLength="28.52">Fill&quot;</tspan> <tspan x="2025.31" textLength="62.49">process,</tspan> <tspan x="2091.73" textLength="41.81">these</tspan> <tspan x="2137.81" textLength="47.78">scores</tspan> <tspan x="2189.82" textLength="24.70">are</tspan> <tspan x="2218.76" textLength="25.47">not</tspan></text>
<text y="1098.84" style="font-size:17.2px;" lengthAdjust="spacing"><tspan x="986.08" textLength="77.57">genearted</tspan> <tspan x="1068.02" textLength="36.77">from</tspan> <tspan x="1109.09" textLength="59.46">random</tspan> <tspan x="1172.94" textLength="72.04">numbers.</tspan>  <tspan x="1252.87" textLength="36.56">They</tspan> <tspan x="1293.75" textLength="24.69">are</tspan> <tspan x="1322.45" textLength="76.96">calculated</tspan> <tspan x="1403.79" textLength="36.77">from</tspan> <tspan x="1443.92">a</tspan> <tspan x="1457.89" textLength="36.83">fixed</tspan> <tspan x="1499.09" textLength="58.61">formula</tspan> <tspan x="1563.25" textLength="44.55">based</tspan> <tspan x="1612.16" textLength="19.59">on</tspan> <tspan x="1636.01" textLength="25.28">the</tspan> <tspan x="1665.18" textLength="23.01" style="font-size:16.0px">SPI</tspan> <tspan x="1692.54" textLength="47.72">values</tspan> <tspan x="1744.43" textLength="15.36">of</tspan> <tspan x="1764.10" textLength="35.81">each</tspan> <tspan x="1804.02" textLength="36.79">club.</tspan>  <tspan x="1848.80" textLength="72.33">Predicted</tspan> <tspan x="1925.68" textLength="40.59">score</tspan> <tspan x="1970.43" textLength="56.21">reflects</tspan> <tspan x="2030.90" textLength="25.28">the</tspan> <tspan x="2060.48" textLength="37.75">most</tspan> <tspan x="2102.81" textLength="38.64">likely</tspan> <tspan x="2145.70" textLength="67.68">outcome</tspan> <tspan x="2217.44" textLength="15.36">of</tspan> <tspan x="2237.11" textLength="35.81">each</tspan></text>
<text y="1121.61" style="font-size:17.2px;" lengthAdjust="spacing"><tspan x="986.56" textLength="54.51">fixture.</tspan></text>
<text y="1167.15" style="font-size:17.2px;" lengthAdjust="spacing"><tspan x="986.41" textLength="28.33">The</tspan> <tspan x="1018.63" textLength="23.01" style="font-size:16.0px">SPI</tspan> <tspan x="1045.99" textLength="47.73">values</tspan> <tspan x="1097.96" textLength="24.69">are</tspan> <tspan x="1126.93" textLength="40.67">listed</tspan> <tspan x="1171.96" textLength="19.59">on</tspan> <tspan x="1196.80" textLength="36.75">“SPI”</tspan> <tspan x="1238.40" textLength="29.87">tab.</tspan>  <tspan x="1276.29">I</tspan> <tspan x="1285.27" textLength="91.62">recommend</tspan> <tspan x="1381.40" textLength="30.11">visit</tspan> <tspan x="1415.88" textLength="144.38">fivethirtyeight.com</tspan> <tspan x="1564.73" textLength="59.18">website</tspan> <tspan x="1628.00" textLength="36.77">from</tspan> <tspan x="1669.08" textLength="34.63">time</tspan> <tspan x="1707.86" textLength="16.02">to</tspan> <tspan x="1728.09" textLength="34.63">time</tspan> <tspan x="1766.86" textLength="28.20">and</tspan> <tspan x="1799.33" textLength="24.16">get</tspan> <tspan x="1827.94" textLength="25.28">the</tspan> <tspan x="1857.51" textLength="41.76">latest</tspan> <tspan x="1903.44" textLength="23.01" style="font-size:16.0px">SPI</tspan> <tspan x="1930.81" textLength="52.76">values.</tspan></text>
<text y="1212.69" style="font-size:17.2px;" lengthAdjust="spacing"><tspan x="985.21" textLength="14.48">In</tspan> <tspan x="1003.95" textLength="25.24">the</tspan> <tspan x="1033.45" textLength="40.13">same</tspan> <tspan x="1078.71" textLength="36.69">“SPI”</tspan> <tspan x="1120.23" textLength="29.75">tab,</tspan> <tspan x="1153.90" textLength="52.73">there’s</tspan> <tspan x="1209.93">a</tspan> <tspan x="1224.98" textLength="29.44" style="font-size:16.0px">“SPI</tspan> <tspan x="1258.68" textLength="87.91">Adjustment</tspan> <tspan x="1350.83" textLength="55.05">Factor”</tspan> <tspan x="1411.04" textLength="38.30" style="font-size:16.0px">(SAF)</tspan> <tspan x="1453.87" textLength="21.86">for</tspan> <tspan x="1479.96" textLength="35.75">each</tspan> <tspan x="1519.96" textLength="44.13">team.</tspan>  <tspan x="1571.76" textLength="28.82">You</tspan> <tspan x="1605.09" textLength="31.82">may</tspan> <tspan x="1641.23" textLength="40.91">apply</tspan> <tspan x="1685.54">a</tspan> <tspan x="1699.64" textLength="59.56">number</tspan> <tspan x="1763.44" textLength="36.71">from</tspan> <tspan x="1804.31" textLength="24.20">-15</tspan> <tspan x="1833.12" textLength="15.99">to</tspan> <tspan x="1852.84" textLength="28.10">+15</tspan> <tspan x="1885.48" textLength="21.86">for</tspan> <tspan x="1911.39" textLength="32.92" style="font-size:16.0px">SAF.</tspan>  <tspan x="1952.39" textLength="59.14">Positive</tspan> <tspan x="2015.40" textLength="28.12" style="font-size:16.0px">SAF</tspan> <tspan x="2047.80" textLength="49.84">boosts</tspan> <tspan x="2101.89" textLength="25.24">the</tspan> <tspan x="2131.28" textLength="50.99">team’s</tspan> <tspan x="2186.63" textLength="102.74">performance.</tspan></text>
<text y="1235.46" style="font-size:17.2px;" lengthAdjust="spacing"><tspan x="985.39" textLength="67.19">Negative</tspan> <tspan x="1056.46" textLength="28.17" style="font-size:16.0px">SAF</tspan> <tspan x="1088.94" textLength="65.95">weakens</tspan> <tspan x="1158.20">a</tspan> <tspan x="1172.24" textLength="44.20">team.</tspan>  <tspan x="1224.29" textLength="28.17" style="font-size:16.0px">SAF</tspan> <tspan x="1256.15">=</tspan> <tspan x="1269.93">0</tspan> <tspan x="1283.58" textLength="36.13">does</tspan> <tspan x="1324.04" textLength="25.46">not</tspan> <tspan x="1353.86" textLength="19.66">do</tspan> <tspan x="1377.71" textLength="70.85">anything.</tspan>  <tspan x="1456.52" textLength="63.36">Extreme</tspan> <tspan x="1524.11" textLength="47.73">values</tspan> <tspan x="1576.00" textLength="15.36">of</tspan> <tspan x="1595.49" textLength="28.17" style="font-size:16.0px">SAF</tspan> <tspan x="1627.64" textLength="26.61">can</tspan> <tspan x="1658.43" textLength="76.57">drastically</tspan> <tspan x="1739.19" textLength="54.48">change</tspan> <tspan x="1797.83" textLength="25.28">the</tspan> <tspan x="1827.38" textLength="63.55">strength</tspan> <tspan x="1895.10" textLength="15.36">of</tspan> <tspan x="1913.93">a</tspan> <tspan x="1927.97" textLength="39.12">team</tspan> <tspan x="1971.38" textLength="28.20">and</tspan> <tspan x="2004.02" textLength="35.01">alter</tspan> <tspan x="2043.35" textLength="25.28">the</tspan> <tspan x="2072.70" textLength="67.68">outcome</tspan> <tspan x="2144.45" textLength="15.36">of</tspan> <tspan x="2164.22" textLength="25.28">the</tspan> <tspan x="2193.66" textLength="43.39">table.</tspan>  <tspan x="2244.75">A</tspan></text>
<text y="1258.23" style="font-size:17.2px;" lengthAdjust="spacing"><tspan x="985.66" textLength="74.41">moderate</tspan> <tspan x="1063.95" textLength="28.16" style="font-size:16.0px">SAF</tspan> <tspan x="1096.51" textLength="20.07">(-5</tspan> <tspan x="1121.21" textLength="16.02">to</tspan> <tspan x="1140.96" textLength="24.44">+5)</tspan> <tspan x="1169.75" textLength="11.68">is</tspan> <tspan x="1185.68" textLength="115.77">recommended,</tspan> <tspan x="1305.18" textLength="9.94">if</tspan> <tspan x="1319.53" textLength="27.79">you</tspan> <tspan x="1351.87" textLength="34.35">wish</tspan> <tspan x="1390.49" textLength="16.02">to</tspan> <tspan x="1410.61" textLength="56.19">deviate</tspan> <tspan x="1470.88" textLength="36.77">from</tspan> <tspan x="1511.68" textLength="23.01" style="font-size:16.0px">SPI</tspan> <tspan x="1538.97" textLength="28.20">and</tspan> <tspan x="1571.46" textLength="54.48">change</tspan> <tspan x="1629.16">a</tspan> <tspan x="1643.20" textLength="51.07">team’s</tspan> <tspan x="1698.65" textLength="102.92">performance.</tspan></text>
<text y="1303.77" style="font-size:17.2px;" lengthAdjust="spacing"><tspan x="985.39" textLength="24.82">For</tspan> <tspan x="1014.42" textLength="61.34">detailed</tspan> <tspan x="1080.31" textLength="90.17">procedures,</tspan> <tspan x="1174.51" textLength="48.46">please</tspan> <tspan x="1227.18" textLength="30.01">visit</tspan> <tspan x="1261.76" textLength="22.90">my</tspan> <tspan x="1289.14" textLength="37.43">blog:</tspan> <tspan x="1330.66" textLength="453.94">https://www.tangfamily.me/predicting-the-premier-league/</tspan></text>
</svg>
</div></body></html>
